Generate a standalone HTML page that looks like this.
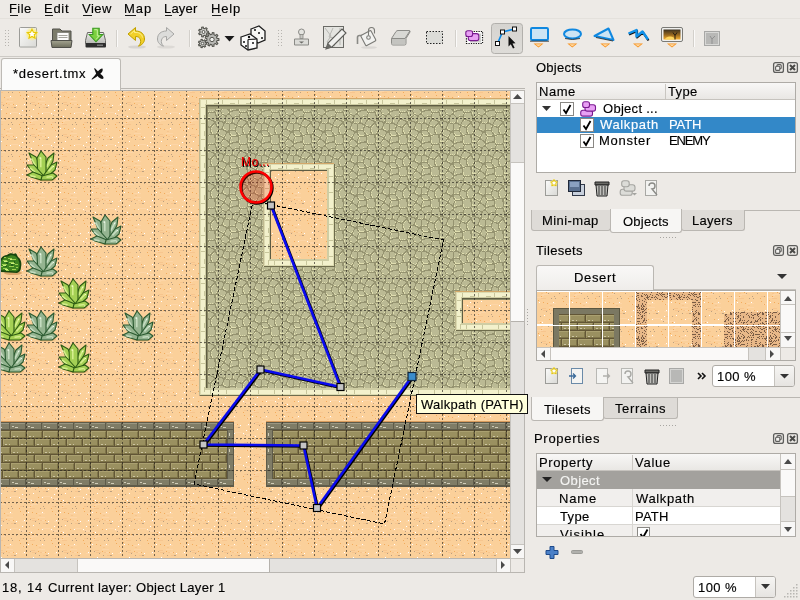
<!DOCTYPE html>
<html><head><meta charset="utf-8">
<style>
*{margin:0;padding:0;box-sizing:border-box}
html,body{width:800px;height:600px;overflow:hidden;background:#edeae6;font-family:"Liberation Sans",sans-serif;font-size:13px;color:#000}
.a{position:absolute}
.t{position:absolute;white-space:nowrap;line-height:1;will-change:transform;-webkit-text-stroke:.15px currentColor}
</style></head><body>
<div class="a" style="left:0px;top:18px;width:800px;height:1px;background:#e4e1dc;"></div><div class="a" style="left:10px;top:15px;width:8px;height:1px;background:#1a1a1a;"></div><div class="a" style="left:45px;top:15px;width:8px;height:1px;background:#1a1a1a;"></div><div class="a" style="left:83px;top:15px;width:9px;height:1px;background:#1a1a1a;"></div><div class="a" style="left:125px;top:15px;width:11px;height:1px;background:#1a1a1a;"></div><div class="a" style="left:165px;top:15px;width:7px;height:1px;background:#1a1a1a;"></div><div class="a" style="left:212px;top:15px;width:9px;height:1px;background:#1a1a1a;"></div><div class="a" style="left:0px;top:56px;width:800px;height:1px;background:#cdcac5;"></div><div class="a" style="left:0px;top:88px;width:525px;height:1px;background:#b9b6b1;"></div><div class="a" style="left:1px;top:58px;width:120px;height:32px;background:#fbfbfa;border:1px solid #bdbab5;border-bottom:none;border-radius:3px 3px 0 0"></div><div class="a" style="left:0px;top:90px;width:525px;height:483px;background:#edeae6;border:1px solid #b9b6b1"></div><svg class="a" style="left:1px;top:91px" width="509" height="467" viewBox="1 91 509 467" shape-rendering="crispEdges"><defs><pattern id="sand" patternUnits="userSpaceOnUse" x="-6" y="86" width="32" height="32"><rect width="32" height="32" fill="#fbd09a"/><path d="M28 29h6v1h-6zM12 11h7v1h-7zM30 11h3v1h-3zM28 19h4v1h-4zM5 2h7v1h-7zM25 28h7v1h-7zM10 0h7v1h-7zM4 3h3v1h-3zM12 15h7v1h-7zM1 29h5v1h-5zM28 12h7v1h-7zM14 18h6v1h-6zM0 5h6v1h-6zM17 26h7v1h-7z" fill="#fdd5a6"/><path d="M5 16h4v1h-4zM14 18h2v1h-2zM4 6h5v1h-5zM6 18h5v1h-5zM4 1h2v1h-2zM13 13h2v1h-2zM30 24h5v1h-5zM26 4h3v1h-3zM17 21h2v1h-2zM19 21h2v1h-2z" fill="#f7c58e"/><path d="M22 19h1v1h-1zM2 10h1v1h-1zM30 18h1v1h-1zM28 24h1v1h-1zM16 10h1v1h-1zM16 27h1v1h-1zM25 27h1v1h-1zM5 30h1v1h-1zM7 23h1v1h-1z" fill="#ffffff"/><path d="M9 19h1v1h-1zM17 4h1v1h-1zM29 4h1v1h-1zM27 29h1v1h-1zM22 1h1v1h-1zM18 6h1v1h-1zM4 17h1v1h-1zM11 1h1v1h-1zM14 6h1v1h-1zM3 24h1v1h-1zM20 21h1v1h-1zM13 21h1v1h-1zM21 21h1v1h-1z" fill="#bca080"/><path d="M26 9h1v1h-1zM12 27h1v1h-1zM19 18h1v1h-1zM3 30h1v1h-1zM29 12h1v1h-1zM25 6h1v1h-1zM10 11h1v1h-1zM1 8h1v1h-1zM4 4h1v1h-1zM9 0h1v1h-1zM12 17h1v1h-1zM6 10h1v1h-1z" fill="#f2ab5c"/></pattern><pattern id="cob" patternUnits="userSpaceOnUse" x="-6" y="86" width="32" height="32"><rect width="32" height="32" fill="#bbba94"/><path d="M0 0h1v1h-1zM7 0h1v1h-1zM14 0h1v1h-1zM21 0h1v1h-1zM22 0h1v1h-1zM23 0h1v1h-1zM30 0h1v1h-1zM31 0h1v1h-1zM7 1h1v1h-1zM14 1h1v1h-1zM21 1h1v1h-1zM22 1h1v1h-1zM23 1h1v1h-1zM24 1h1v1h-1zM30 1h1v1h-1zM31 1h1v1h-1zM0 2h1v1h-1zM1 2h1v1h-1zM7 2h1v1h-1zM14 2h1v1h-1zM20 2h1v1h-1zM21 2h1v1h-1zM25 2h1v1h-1zM26 2h1v1h-1zM27 2h1v1h-1zM30 2h1v1h-1zM31 2h1v1h-1zM1 3h1v1h-1zM2 3h1v1h-1zM3 3h1v1h-1zM4 3h1v1h-1zM6 3h1v1h-1zM7 3h1v1h-1zM14 3h1v1h-1zM20 3h1v1h-1zM27 3h1v1h-1zM28 3h1v1h-1zM29 3h1v1h-1zM4 4h1v1h-1zM5 4h1v1h-1zM6 4h1v1h-1zM7 4h1v1h-1zM13 4h1v1h-1zM14 4h1v1h-1zM19 4h1v1h-1zM28 4h1v1h-1zM29 4h1v1h-1zM5 5h1v1h-1zM6 5h1v1h-1zM8 5h1v1h-1zM9 5h1v1h-1zM10 5h1v1h-1zM12 5h1v1h-1zM13 5h1v1h-1zM14 5h1v1h-1zM15 5h1v1h-1zM16 5h1v1h-1zM19 5h1v1h-1zM27 5h1v1h-1zM28 5h1v1h-1zM29 5h1v1h-1zM5 6h1v1h-1zM11 6h1v1h-1zM16 6h1v1h-1zM17 6h1v1h-1zM18 6h1v1h-1zM26 6h1v1h-1zM27 6h1v1h-1zM29 6h1v1h-1zM30 6h1v1h-1zM5 7h1v1h-1zM11 7h1v1h-1zM18 7h1v1h-1zM19 7h1v1h-1zM25 7h1v1h-1zM26 7h1v1h-1zM30 7h1v1h-1zM4 8h1v1h-1zM11 8h1v1h-1zM18 8h1v1h-1zM20 8h1v1h-1zM21 8h1v1h-1zM22 8h1v1h-1zM24 8h1v1h-1zM25 8h1v1h-1zM30 8h1v1h-1zM31 8h1v1h-1zM4 9h1v1h-1zM11 9h1v1h-1zM17 9h1v1h-1zM18 9h1v1h-1zM22 9h1v1h-1zM23 9h1v1h-1zM24 9h1v1h-1zM31 9h1v1h-1zM0 10h1v1h-1zM3 10h1v1h-1zM4 10h1v1h-1zM11 10h1v1h-1zM17 10h1v1h-1zM24 10h1v1h-1zM0 11h1v1h-1zM1 11h1v1h-1zM2 11h1v1h-1zM3 11h1v1h-1zM4 11h1v1h-1zM5 11h1v1h-1zM11 11h1v1h-1zM17 11h1v1h-1zM24 11h1v1h-1zM0 12h1v1h-1zM5 12h1v1h-1zM6 12h1v1h-1zM7 12h1v1h-1zM10 12h1v1h-1zM11 12h1v1h-1zM12 12h1v1h-1zM13 12h1v1h-1zM14 12h1v1h-1zM15 12h1v1h-1zM16 12h1v1h-1zM17 12h1v1h-1zM24 12h1v1h-1zM0 13h1v1h-1zM7 13h1v1h-1zM8 13h1v1h-1zM9 13h1v1h-1zM10 13h1v1h-1zM11 13h1v1h-1zM17 13h1v1h-1zM24 13h1v1h-1zM31 13h1v1h-1zM8 14h1v1h-1zM9 14h1v1h-1zM10 14h1v1h-1zM11 14h1v1h-1zM18 14h1v1h-1zM24 14h1v1h-1zM25 14h1v1h-1zM31 14h1v1h-1zM8 15h1v1h-1zM11 15h1v1h-1zM18 15h1v1h-1zM19 15h1v1h-1zM25 15h1v1h-1zM30 15h1v1h-1zM31 15h1v1h-1zM0 16h1v1h-1zM7 16h1v1h-1zM11 16h1v1h-1zM12 16h1v1h-1zM19 16h1v1h-1zM23 16h1v1h-1zM24 16h1v1h-1zM25 16h1v1h-1zM26 16h1v1h-1zM27 16h1v1h-1zM28 16h1v1h-1zM29 16h1v1h-1zM30 16h1v1h-1zM31 16h1v1h-1zM0 17h1v1h-1zM1 17h1v1h-1zM7 17h1v1h-1zM12 17h1v1h-1zM18 17h1v1h-1zM19 17h1v1h-1zM20 17h1v1h-1zM21 17h1v1h-1zM22 17h1v1h-1zM28 17h1v1h-1zM29 17h1v1h-1zM2 18h1v1h-1zM3 18h1v1h-1zM6 18h1v1h-1zM13 18h1v1h-1zM14 18h1v1h-1zM15 18h1v1h-1zM16 18h1v1h-1zM17 18h1v1h-1zM18 18h1v1h-1zM19 18h1v1h-1zM20 18h1v1h-1zM28 18h1v1h-1zM29 18h1v1h-1zM4 19h1v1h-1zM5 19h1v1h-1zM6 19h1v1h-1zM12 19h1v1h-1zM20 19h1v1h-1zM28 19h1v1h-1zM29 19h1v1h-1zM5 20h1v1h-1zM6 20h1v1h-1zM12 20h1v1h-1zM20 20h1v1h-1zM29 20h1v1h-1zM4 21h1v1h-1zM5 21h1v1h-1zM6 21h1v1h-1zM7 21h1v1h-1zM11 21h1v1h-1zM20 21h1v1h-1zM29 21h1v1h-1zM4 22h1v1h-1zM8 22h1v1h-1zM9 22h1v1h-1zM11 22h1v1h-1zM20 22h1v1h-1zM29 22h1v1h-1zM3 23h1v1h-1zM9 23h1v1h-1zM10 23h1v1h-1zM11 23h1v1h-1zM18 23h1v1h-1zM19 23h1v1h-1zM20 23h1v1h-1zM29 23h1v1h-1zM0 24h1v1h-1zM1 24h1v1h-1zM2 24h1v1h-1zM10 24h1v1h-1zM11 24h1v1h-1zM14 24h1v1h-1zM15 24h1v1h-1zM16 24h1v1h-1zM17 24h1v1h-1zM18 24h1v1h-1zM19 24h1v1h-1zM20 24h1v1h-1zM29 24h1v1h-1zM30 24h1v1h-1zM31 24h1v1h-1zM2 25h1v1h-1zM11 25h1v1h-1zM12 25h1v1h-1zM13 25h1v1h-1zM14 25h1v1h-1zM21 25h1v1h-1zM28 25h1v1h-1zM3 26h1v1h-1zM11 26h1v1h-1zM21 26h1v1h-1zM22 26h1v1h-1zM23 26h1v1h-1zM24 26h1v1h-1zM25 26h1v1h-1zM26 26h1v1h-1zM27 26h1v1h-1zM28 26h1v1h-1zM29 26h1v1h-1zM3 27h1v1h-1zM10 27h1v1h-1zM11 27h1v1h-1zM22 27h1v1h-1zM29 27h1v1h-1zM4 28h1v1h-1zM5 28h1v1h-1zM9 28h1v1h-1zM10 28h1v1h-1zM11 28h1v1h-1zM21 28h1v1h-1zM29 28h1v1h-1zM3 29h1v1h-1zM6 29h1v1h-1zM7 29h1v1h-1zM8 29h1v1h-1zM12 29h1v1h-1zM21 29h1v1h-1zM29 29h1v1h-1zM30 29h1v1h-1zM1 30h1v1h-1zM2 30h1v1h-1zM7 30h1v1h-1zM8 30h1v1h-1zM13 30h1v1h-1zM17 30h1v1h-1zM18 30h1v1h-1zM19 30h1v1h-1zM20 30h1v1h-1zM21 30h1v1h-1zM30 30h1v1h-1zM0 31h1v1h-1zM1 31h1v1h-1zM7 31h1v1h-1zM14 31h1v1h-1zM15 31h1v1h-1zM16 31h1v1h-1zM21 31h1v1h-1zM30 31h1v1h-1z" fill="#959370"/><path d="M1 0h1v1h-1zM15 0h1v1h-1zM0 1h1v1h-1zM6 2h1v1h-1zM15 2h1v1h-1zM22 2h1v1h-1zM29 2h1v1h-1zM15 3h1v1h-1zM8 4h1v1h-1zM10 4h1v1h-1zM12 4h1v1h-1zM31 6h1v1h-1zM20 7h1v1h-1zM21 7h1v1h-1zM24 7h1v1h-1zM27 7h1v1h-1zM31 7h1v1h-1zM17 8h1v1h-1zM26 8h1v1h-1zM5 9h1v1h-1zM5 10h1v1h-1zM25 10h1v1h-1zM6 11h1v1h-1zM7 11h1v1h-1zM12 11h1v1h-1zM15 11h1v1h-1zM16 11h1v1h-1zM1 12h1v1h-1zM25 12h1v1h-1zM31 12h1v1h-1zM1 13h1v1h-1zM18 13h1v1h-1zM25 13h1v1h-1zM26 14h1v1h-1zM30 14h1v1h-1zM12 15h1v1h-1zM20 15h1v1h-1zM26 15h1v1h-1zM1 16h1v1h-1zM13 16h1v1h-1zM21 16h1v1h-1zM3 17h1v1h-1zM6 17h1v1h-1zM13 17h1v1h-1zM14 17h1v1h-1zM15 17h1v1h-1zM16 17h1v1h-1zM17 17h1v1h-1zM23 17h1v1h-1zM30 17h1v1h-1zM5 18h1v1h-1zM12 18h1v1h-1zM21 18h1v1h-1zM30 18h1v1h-1zM7 19h1v1h-1zM13 19h1v1h-1zM4 20h1v1h-1zM13 20h1v1h-1zM5 22h1v1h-1zM21 22h1v1h-1zM30 22h1v1h-1zM0 23h1v1h-1zM1 23h1v1h-1zM4 23h1v1h-1zM12 23h1v1h-1zM14 23h1v1h-1zM21 23h1v1h-1zM30 23h1v1h-1zM31 23h1v1h-1zM12 24h1v1h-1zM21 24h1v1h-1zM22 25h1v1h-1zM24 25h1v1h-1zM26 25h1v1h-1zM10 26h1v1h-1zM30 26h1v1h-1zM4 27h1v1h-1zM5 27h1v1h-1zM12 27h1v1h-1zM21 27h1v1h-1zM23 27h1v1h-1zM30 27h1v1h-1zM1 29h1v1h-1zM4 29h1v1h-1zM17 29h1v1h-1zM0 30h1v1h-1zM17 31h1v1h-1zM22 31h1v1h-1zM23 31h1v1h-1z" fill="#e0deb0"/></pattern><pattern id="brk" patternUnits="userSpaceOnUse" x="-6" y="430" width="32" height="16"><rect width="32" height="16" fill="#625636"/><path d="M-15 1h15v7h-15zM1 1h15v7h-15zM17 1h15v7h-15zM33 1h15v7h-15zM-7 9h15v7h-15zM9 9h15v7h-15zM25 9h15v7h-15zM41 9h15v7h-15z" fill="#9a9060"/><path d="M-15 1h14v1h-14zM-15 2h1v4h-1zM1 1h14v1h-14zM1 2h1v4h-1zM17 1h14v1h-14zM17 2h1v4h-1zM33 1h14v1h-14zM33 2h1v4h-1zM-7 9h14v1h-14zM-7 10h1v4h-1zM9 9h14v1h-14zM9 10h1v4h-1zM25 9h14v1h-14zM25 10h1v4h-1zM41 9h14v1h-14zM41 10h1v4h-1z" fill="#aaa070"/><path d="M-14 7h14v1h-14zM-1 2h1v5h-1zM2 7h14v1h-14zM15 2h1v5h-1zM18 7h14v1h-14zM31 2h1v5h-1zM34 7h14v1h-14zM47 2h1v5h-1zM-6 15h14v1h-14zM7 10h1v5h-1zM10 15h14v1h-14zM23 10h1v5h-1zM26 15h14v1h-14zM39 10h1v5h-1zM42 15h14v1h-14zM55 10h1v5h-1z" fill="#7e7448"/><path d="M-13 6h2v1h-2zM-9 6h1v1h-1zM3 6h2v1h-2zM7 6h1v1h-1zM19 6h2v1h-2zM23 6h1v1h-1zM35 6h2v1h-2zM39 6h1v1h-1zM-5 14h2v1h-2zM-1 14h1v1h-1zM11 14h2v1h-2zM15 14h1v1h-1zM27 14h2v1h-2zM31 14h1v1h-1zM43 14h2v1h-2zM47 14h1v1h-1z" fill="#cec6a4"/></pattern><pattern id="cap" patternUnits="userSpaceOnUse" x="-6" y="422" width="16" height="8"><rect width="16" height="8" fill="#7f7c66"/><path d="M0 0h16v1h-16zM0 7h16v1h-16zM15 0h1v8h-1z" fill="#5e5b4a"/><path d="M1 1h14v1h-14z" fill="#9a9782"/><path d="M2 4h2v1h-2zM5 5h3v1h-3z" fill="#d0ccb8"/></pattern></defs><rect x="0" y="80" width="520" height="490" fill="url(#sand)"/><rect x="199" y="98" width="331" height="297" fill="#d3a86a"/><rect x="199" y="99" width="1" height="296" fill="#c0b890"/><rect x="200" y="99" width="331" height="297" fill="#6e6c4c"/><rect x="200" y="99" width="330" height="296" fill="#f3f1cc"/><rect x="200.5" y="99.5" width="329" height="295" fill="none" stroke="#dcdab0" stroke-width="1"/><path d="M206 100h1v4h-1zM210 390h1v4h-1zM214 103h5v1h-5zM222 100h1v4h-1zM226 390h1v4h-1zM230 103h5v1h-5zM238 100h1v4h-1zM242 390h1v4h-1zM246 103h5v1h-5zM254 100h1v4h-1zM258 390h1v4h-1zM262 103h5v1h-5zM270 100h1v4h-1zM274 390h1v4h-1zM278 103h5v1h-5zM286 100h1v4h-1zM290 390h1v4h-1zM294 103h5v1h-5zM302 100h1v4h-1zM306 390h1v4h-1zM310 103h5v1h-5zM318 100h1v4h-1zM322 390h1v4h-1zM326 103h5v1h-5zM334 100h1v4h-1zM338 390h1v4h-1zM342 103h5v1h-5zM350 100h1v4h-1zM354 390h1v4h-1zM358 103h5v1h-5zM366 100h1v4h-1zM370 390h1v4h-1zM374 103h5v1h-5zM382 100h1v4h-1zM386 390h1v4h-1zM390 103h5v1h-5zM398 100h1v4h-1zM402 390h1v4h-1zM406 103h5v1h-5zM414 100h1v4h-1zM418 390h1v4h-1zM422 103h5v1h-5zM430 100h1v4h-1zM434 390h1v4h-1zM438 103h5v1h-5zM446 100h1v4h-1zM450 390h1v4h-1zM454 103h5v1h-5zM462 100h1v4h-1zM466 390h1v4h-1zM470 103h5v1h-5zM478 100h1v4h-1zM482 390h1v4h-1zM486 103h5v1h-5zM494 100h1v4h-1zM498 390h1v4h-1zM502 103h5v1h-5zM510 100h1v4h-1zM514 390h1v4h-1zM518 103h5v1h-5zM201 107h4v1h-4zM525 111h4v1h-4zM204 115h1v5h-1zM201 123h4v1h-4zM525 127h4v1h-4zM204 131h1v5h-1zM201 139h4v1h-4zM525 143h4v1h-4zM204 147h1v5h-1zM201 155h4v1h-4zM525 159h4v1h-4zM204 163h1v5h-1zM201 171h4v1h-4zM525 175h4v1h-4zM204 179h1v5h-1zM201 187h4v1h-4zM525 191h4v1h-4zM204 195h1v5h-1zM201 203h4v1h-4zM525 207h4v1h-4zM204 211h1v5h-1zM201 219h4v1h-4zM525 223h4v1h-4zM204 227h1v5h-1zM201 235h4v1h-4zM525 239h4v1h-4zM204 243h1v5h-1zM201 251h4v1h-4zM525 255h4v1h-4zM204 259h1v5h-1zM201 267h4v1h-4zM525 271h4v1h-4zM204 275h1v5h-1zM201 283h4v1h-4zM525 287h4v1h-4zM204 291h1v5h-1zM201 299h4v1h-4zM525 303h4v1h-4zM204 307h1v5h-1zM201 315h4v1h-4zM525 319h4v1h-4zM204 323h1v5h-1zM201 331h4v1h-4zM525 335h4v1h-4zM204 339h1v5h-1zM201 347h4v1h-4zM525 351h4v1h-4zM204 355h1v5h-1zM201 363h4v1h-4zM525 367h4v1h-4zM204 371h1v5h-1zM201 379h4v1h-4zM525 383h4v1h-4zM204 387h1v5h-1z" fill="#c8c69c"/><rect x="205" y="104" width="320" height="286" fill="#cfcda4"/><rect x="206" y="105" width="317" height="283" fill="#5e5c42"/><rect x="207" y="106" width="316" height="282" fill="#8a8864"/><rect x="208" y="107" width="315" height="281" fill="#a4a27c"/><rect x="208" y="109" width="320" height="279" fill="url(#cob)"/><rect x="263" y="163" width="71" height="103" fill="#d3a86a"/><rect x="263" y="164" width="1" height="102" fill="#c0b890"/><rect x="264" y="164" width="71" height="103" fill="#6e6c4c"/><rect x="264" y="164" width="70" height="102" fill="#f3f1cc"/><rect x="264.5" y="164.5" width="69" height="101" fill="none" stroke="#dcdab0" stroke-width="1"/><path d="M270 165h1v4h-1zM274 261h1v4h-1zM278 168h5v1h-5zM286 165h1v4h-1zM290 261h1v4h-1zM294 168h5v1h-5zM302 165h1v4h-1zM306 261h1v4h-1zM310 168h5v1h-5zM318 165h1v4h-1zM322 261h1v4h-1zM326 168h5v1h-5zM265 172h4v1h-4zM329 176h4v1h-4zM268 180h1v5h-1zM265 188h4v1h-4zM329 192h4v1h-4zM268 196h1v5h-1zM265 204h4v1h-4zM329 208h4v1h-4zM268 212h1v5h-1zM265 220h4v1h-4zM329 224h4v1h-4zM268 228h1v5h-1zM265 236h4v1h-4zM329 240h4v1h-4zM268 244h1v5h-1zM265 252h4v1h-4zM329 256h4v1h-4zM268 260h1v5h-1z" fill="#c8c69c"/><rect x="269" y="169" width="60" height="92" fill="#cfcda4"/><rect x="270" y="170" width="57" height="89" fill="#5e5c42"/><rect x="271" y="171" width="56" height="88" fill="#8a8864"/><rect x="272" y="172" width="55" height="87" fill="#a4a27c"/><rect x="271" y="171" width="56" height="88" fill="url(#sand)"/><rect x="455" y="291" width="75" height="39" fill="#d3a86a"/><rect x="455" y="292" width="1" height="38" fill="#c0b890"/><rect x="456" y="292" width="75" height="39" fill="#6e6c4c"/><rect x="456" y="292" width="74" height="38" fill="#f3f1cc"/><rect x="456.5" y="292.5" width="73" height="37" fill="none" stroke="#dcdab0" stroke-width="1"/><path d="M462 293h1v4h-1zM466 325h1v4h-1zM470 296h5v1h-5zM478 293h1v4h-1zM482 325h1v4h-1zM486 296h5v1h-5zM494 293h1v4h-1zM498 325h1v4h-1zM502 296h5v1h-5zM510 293h1v4h-1zM514 325h1v4h-1zM518 296h5v1h-5zM457 300h4v1h-4zM525 304h4v1h-4zM460 308h1v5h-1zM457 316h4v1h-4zM525 320h4v1h-4zM460 324h1v5h-1z" fill="#c8c69c"/><rect x="461" y="297" width="64" height="28" fill="#cfcda4"/><rect x="462" y="298" width="61" height="25" fill="#5e5c42"/><rect x="463" y="299" width="60" height="24" fill="#8a8864"/><rect x="464" y="300" width="59" height="23" fill="#a4a27c"/><rect x="463" y="300" width="60" height="23" fill="url(#sand)"/><rect x="-10" y="421" width="244" height="1" fill="#d89b5c"/><rect x="-10" y="422" width="244" height="65" fill="url(#cap)"/><rect x="-4" y="430" width="232" height="49" fill="url(#brk)"/><rect x="-10" y="422" width="244" height="65" fill="none" stroke="#55523f" stroke-width="1" transform="translate(.5 .5) scale(1)" style="display:none"/><rect x="266" y="421" width="264" height="1" fill="#d89b5c"/><rect x="266" y="422" width="264" height="65" fill="url(#cap)"/><rect x="272" y="430" width="252" height="49" fill="url(#brk)"/><rect x="266" y="422" width="264" height="65" fill="none" stroke="#55523f" stroke-width="1" transform="translate(.5 .5) scale(1)" style="display:none"/><path d="M228 430h6v49h-6z M266 430h6v49h-6z" fill="#7f7c66"/><path d="M233 422h1v65h-1z M266 422h1v65h-1z M227 430h1v49h-1z M272 430h1v49h-1z" fill="#5e5b4a"/><path d="M229 438h4v1h-4zM229 454h4v1h-4zM229 470h4v1h-4zM267 438h4v1h-4zM267 454h4v1h-4zM267 470h4v1h-4z" fill="#5e5b4a"/><path d="M229 433h1v3h-1zM229 449h1v3h-1zM229 465h1v3h-1zM268 433h1v3h-1zM268 449h1v3h-1zM268 465h1v3h-1z" fill="#d0ccb8"/><g transform="translate(26,150)" shape-rendering="auto"><ellipse cx="20" cy="29" rx="10" ry="2.5" fill="#d8a060" opacity=".7"/><path d="M12 26 L6 10 L3 3 L10 7 L18 23Z" fill="#a4d054" stroke="#2c5a12" stroke-width="1.1" stroke-linejoin="round"/><path d="M9.7 16.4 L5.5 8.4" stroke="#d4ee8c" stroke-width="1.6"/><path d="M5.0 9.9 l-0.9 -1.6" stroke="#fbffd0" stroke-width="1"/><path d="M15 25 L22 8 L28 3 L27 11 L20 26Z" fill="#a4d054" stroke="#2c5a12" stroke-width="1.1" stroke-linejoin="round"/><path d="M20.6 17.1 L24.9 8.6" stroke="#d4ee8c" stroke-width="1.6"/><path d="M24.4 10.1 l0.8 -1.7" stroke="#fbffd0" stroke-width="1"/><path d="M12 27 L11 8 L15 1 L20 7 L20 27Z" fill="#a4d054" stroke="#2c5a12" stroke-width="1.1" stroke-linejoin="round"/><path d="M14.8 17.2 L14.8 7.5" stroke="#d4ee8c" stroke-width="1.6"/><path d="M14.2 9.0 l-0.1 -1.9" stroke="#fbffd0" stroke-width="1"/><path d="M13 28 L4 19 L1 15 L8 15 L17 25Z" fill="#a4d054" stroke="#2c5a12" stroke-width="1.1" stroke-linejoin="round"/><path d="M8.9 22.2 L4.0 17.9" stroke="#d4ee8c" stroke-width="1.6"/><path d="M3.5 19.4 l-1.1 -0.9" stroke="#fbffd0" stroke-width="1"/><path d="M17 26 L25 15 L31 12 L29 20 L20 28Z" fill="#a4d054" stroke="#2c5a12" stroke-width="1.1" stroke-linejoin="round"/><path d="M22.4 21.4 L27.4 15.8" stroke="#d4ee8c" stroke-width="1.6"/><path d="M26.9 17.2 l0.9 -1.1" stroke="#fbffd0" stroke-width="1"/><path d="M15 30 L5 27 L1 25 L7 22 L17 26Z" fill="#a4d054" stroke="#2c5a12" stroke-width="1.1" stroke-linejoin="round"/><path d="M9.6 26.9 L4.2 25.8" stroke="#d4ee8c" stroke-width="1.6"/><path d="M3.8 27.2 l-1.1 -0.2" stroke="#fbffd0" stroke-width="1"/><path d="M16 26 L27 23 L31 26 L26 30 L15 30Z" fill="#a4d054" stroke="#2c5a12" stroke-width="1.1" stroke-linejoin="round"/><path d="M20.5 27.2 L26.6 26.5" stroke="#d4ee8c" stroke-width="1.6"/><path d="M26.1 28.0 l1.2 -0.1" stroke="#fbffd0" stroke-width="1"/></g><g transform="translate(90,214)" shape-rendering="auto"><ellipse cx="20" cy="29" rx="10" ry="2.5" fill="#d8a060" opacity=".7"/><path d="M12 26 L6 10 L3 3 L10 7 L18 23Z" fill="#94b490" stroke="#2a5a30" stroke-width="1.1" stroke-linejoin="round"/><path d="M9.7 16.4 L5.5 8.4" stroke="#c4dcc0" stroke-width="1.6"/><path d="M5.0 9.9 l-0.9 -1.6" stroke="#f8fff4" stroke-width="1"/><path d="M15 25 L22 8 L28 3 L27 11 L20 26Z" fill="#94b490" stroke="#2a5a30" stroke-width="1.1" stroke-linejoin="round"/><path d="M20.6 17.1 L24.9 8.6" stroke="#c4dcc0" stroke-width="1.6"/><path d="M24.4 10.1 l0.8 -1.7" stroke="#f8fff4" stroke-width="1"/><path d="M12 27 L11 8 L15 1 L20 7 L20 27Z" fill="#94b490" stroke="#2a5a30" stroke-width="1.1" stroke-linejoin="round"/><path d="M14.8 17.2 L14.8 7.5" stroke="#c4dcc0" stroke-width="1.6"/><path d="M14.2 9.0 l-0.1 -1.9" stroke="#f8fff4" stroke-width="1"/><path d="M13 28 L4 19 L1 15 L8 15 L17 25Z" fill="#94b490" stroke="#2a5a30" stroke-width="1.1" stroke-linejoin="round"/><path d="M8.9 22.2 L4.0 17.9" stroke="#c4dcc0" stroke-width="1.6"/><path d="M3.5 19.4 l-1.1 -0.9" stroke="#f8fff4" stroke-width="1"/><path d="M17 26 L25 15 L31 12 L29 20 L20 28Z" fill="#94b490" stroke="#2a5a30" stroke-width="1.1" stroke-linejoin="round"/><path d="M22.4 21.4 L27.4 15.8" stroke="#c4dcc0" stroke-width="1.6"/><path d="M26.9 17.2 l0.9 -1.1" stroke="#f8fff4" stroke-width="1"/><path d="M15 30 L5 27 L1 25 L7 22 L17 26Z" fill="#94b490" stroke="#2a5a30" stroke-width="1.1" stroke-linejoin="round"/><path d="M9.6 26.9 L4.2 25.8" stroke="#c4dcc0" stroke-width="1.6"/><path d="M3.8 27.2 l-1.1 -0.2" stroke="#f8fff4" stroke-width="1"/><path d="M16 26 L27 23 L31 26 L26 30 L15 30Z" fill="#94b490" stroke="#2a5a30" stroke-width="1.1" stroke-linejoin="round"/><path d="M20.5 27.2 L26.6 26.5" stroke="#c4dcc0" stroke-width="1.6"/><path d="M26.1 28.0 l1.2 -0.1" stroke="#f8fff4" stroke-width="1"/></g><g transform="translate(-6,246)" shape-rendering="auto">
<ellipse cx="19" cy="27" rx="9" ry="2" fill="#d9a56a"/>
<path d="M6 26 C3 24 4 18 6 15 C7 11 10 9 13 9 C15 7 18 7 20 8 C22 6 23 9 24 11 C27 13 28 17 27 21 C27 24 26 26 23 27 Z" fill="#17460e"/>
<path d="M7 24 C5 21 6 17 8 14 C9 12 12 10 14 10.5 C16 9 19 9 21 10 C24 12 26 16 25.5 20 C25 23 24 25 22 25.5 Z" fill="#3f8420"/>
<path d="M9 14h4v1h-4zM13 15h1v1h-1zM14 12h4v1h-4zM18 13h1v1h-1zM19 13h3v1h-3zM8 18h5v1h-5zM15 16h5v1h-5zM20 17h1v1h-1zM21 18h3v1h-3zM9 22h4v1h-4zM15 20h5v1h-5zM18 23h4v1h-4zM10 11h2v1h-2zM7 20h2v1h-2zM12 24h3v1h-3zM22 21h2v1h-2z" fill="#9cd050"/><path d="M10 15h3v1h-3zM16 13h2v1h-2zM9 19h3v1h-3zM17 17h3v1h-3zM11 23h3v1h-3z" fill="#cdf080"/>
<path d="M12 16h2v2h-2zM17 18h2v2h-2zM11 20h2v1h-2zM20 15h1v2h-1z" fill="#25601a"/>
</g><g transform="translate(26,246)" shape-rendering="auto"><ellipse cx="20" cy="29" rx="10" ry="2.5" fill="#d8a060" opacity=".7"/><path d="M12 26 L6 10 L3 3 L10 7 L18 23Z" fill="#94b490" stroke="#2a5a30" stroke-width="1.1" stroke-linejoin="round"/><path d="M9.7 16.4 L5.5 8.4" stroke="#c4dcc0" stroke-width="1.6"/><path d="M5.0 9.9 l-0.9 -1.6" stroke="#f8fff4" stroke-width="1"/><path d="M15 25 L22 8 L28 3 L27 11 L20 26Z" fill="#94b490" stroke="#2a5a30" stroke-width="1.1" stroke-linejoin="round"/><path d="M20.6 17.1 L24.9 8.6" stroke="#c4dcc0" stroke-width="1.6"/><path d="M24.4 10.1 l0.8 -1.7" stroke="#f8fff4" stroke-width="1"/><path d="M12 27 L11 8 L15 1 L20 7 L20 27Z" fill="#94b490" stroke="#2a5a30" stroke-width="1.1" stroke-linejoin="round"/><path d="M14.8 17.2 L14.8 7.5" stroke="#c4dcc0" stroke-width="1.6"/><path d="M14.2 9.0 l-0.1 -1.9" stroke="#f8fff4" stroke-width="1"/><path d="M13 28 L4 19 L1 15 L8 15 L17 25Z" fill="#94b490" stroke="#2a5a30" stroke-width="1.1" stroke-linejoin="round"/><path d="M8.9 22.2 L4.0 17.9" stroke="#c4dcc0" stroke-width="1.6"/><path d="M3.5 19.4 l-1.1 -0.9" stroke="#f8fff4" stroke-width="1"/><path d="M17 26 L25 15 L31 12 L29 20 L20 28Z" fill="#94b490" stroke="#2a5a30" stroke-width="1.1" stroke-linejoin="round"/><path d="M22.4 21.4 L27.4 15.8" stroke="#c4dcc0" stroke-width="1.6"/><path d="M26.9 17.2 l0.9 -1.1" stroke="#f8fff4" stroke-width="1"/><path d="M15 30 L5 27 L1 25 L7 22 L17 26Z" fill="#94b490" stroke="#2a5a30" stroke-width="1.1" stroke-linejoin="round"/><path d="M9.6 26.9 L4.2 25.8" stroke="#c4dcc0" stroke-width="1.6"/><path d="M3.8 27.2 l-1.1 -0.2" stroke="#f8fff4" stroke-width="1"/><path d="M16 26 L27 23 L31 26 L26 30 L15 30Z" fill="#94b490" stroke="#2a5a30" stroke-width="1.1" stroke-linejoin="round"/><path d="M20.5 27.2 L26.6 26.5" stroke="#c4dcc0" stroke-width="1.6"/><path d="M26.1 28.0 l1.2 -0.1" stroke="#f8fff4" stroke-width="1"/></g><g transform="translate(58,278)" shape-rendering="auto"><ellipse cx="20" cy="29" rx="10" ry="2.5" fill="#d8a060" opacity=".7"/><path d="M12 26 L6 10 L3 3 L10 7 L18 23Z" fill="#a4d054" stroke="#2c5a12" stroke-width="1.1" stroke-linejoin="round"/><path d="M9.7 16.4 L5.5 8.4" stroke="#d4ee8c" stroke-width="1.6"/><path d="M5.0 9.9 l-0.9 -1.6" stroke="#fbffd0" stroke-width="1"/><path d="M15 25 L22 8 L28 3 L27 11 L20 26Z" fill="#a4d054" stroke="#2c5a12" stroke-width="1.1" stroke-linejoin="round"/><path d="M20.6 17.1 L24.9 8.6" stroke="#d4ee8c" stroke-width="1.6"/><path d="M24.4 10.1 l0.8 -1.7" stroke="#fbffd0" stroke-width="1"/><path d="M12 27 L11 8 L15 1 L20 7 L20 27Z" fill="#a4d054" stroke="#2c5a12" stroke-width="1.1" stroke-linejoin="round"/><path d="M14.8 17.2 L14.8 7.5" stroke="#d4ee8c" stroke-width="1.6"/><path d="M14.2 9.0 l-0.1 -1.9" stroke="#fbffd0" stroke-width="1"/><path d="M13 28 L4 19 L1 15 L8 15 L17 25Z" fill="#a4d054" stroke="#2c5a12" stroke-width="1.1" stroke-linejoin="round"/><path d="M8.9 22.2 L4.0 17.9" stroke="#d4ee8c" stroke-width="1.6"/><path d="M3.5 19.4 l-1.1 -0.9" stroke="#fbffd0" stroke-width="1"/><path d="M17 26 L25 15 L31 12 L29 20 L20 28Z" fill="#a4d054" stroke="#2c5a12" stroke-width="1.1" stroke-linejoin="round"/><path d="M22.4 21.4 L27.4 15.8" stroke="#d4ee8c" stroke-width="1.6"/><path d="M26.9 17.2 l0.9 -1.1" stroke="#fbffd0" stroke-width="1"/><path d="M15 30 L5 27 L1 25 L7 22 L17 26Z" fill="#a4d054" stroke="#2c5a12" stroke-width="1.1" stroke-linejoin="round"/><path d="M9.6 26.9 L4.2 25.8" stroke="#d4ee8c" stroke-width="1.6"/><path d="M3.8 27.2 l-1.1 -0.2" stroke="#fbffd0" stroke-width="1"/><path d="M16 26 L27 23 L31 26 L26 30 L15 30Z" fill="#a4d054" stroke="#2c5a12" stroke-width="1.1" stroke-linejoin="round"/><path d="M20.5 27.2 L26.6 26.5" stroke="#d4ee8c" stroke-width="1.6"/><path d="M26.1 28.0 l1.2 -0.1" stroke="#fbffd0" stroke-width="1"/></g><g transform="translate(-6,310)" shape-rendering="auto"><ellipse cx="20" cy="29" rx="10" ry="2.5" fill="#d8a060" opacity=".7"/><path d="M12 26 L6 10 L3 3 L10 7 L18 23Z" fill="#a4d054" stroke="#2c5a12" stroke-width="1.1" stroke-linejoin="round"/><path d="M9.7 16.4 L5.5 8.4" stroke="#d4ee8c" stroke-width="1.6"/><path d="M5.0 9.9 l-0.9 -1.6" stroke="#fbffd0" stroke-width="1"/><path d="M15 25 L22 8 L28 3 L27 11 L20 26Z" fill="#a4d054" stroke="#2c5a12" stroke-width="1.1" stroke-linejoin="round"/><path d="M20.6 17.1 L24.9 8.6" stroke="#d4ee8c" stroke-width="1.6"/><path d="M24.4 10.1 l0.8 -1.7" stroke="#fbffd0" stroke-width="1"/><path d="M12 27 L11 8 L15 1 L20 7 L20 27Z" fill="#a4d054" stroke="#2c5a12" stroke-width="1.1" stroke-linejoin="round"/><path d="M14.8 17.2 L14.8 7.5" stroke="#d4ee8c" stroke-width="1.6"/><path d="M14.2 9.0 l-0.1 -1.9" stroke="#fbffd0" stroke-width="1"/><path d="M13 28 L4 19 L1 15 L8 15 L17 25Z" fill="#a4d054" stroke="#2c5a12" stroke-width="1.1" stroke-linejoin="round"/><path d="M8.9 22.2 L4.0 17.9" stroke="#d4ee8c" stroke-width="1.6"/><path d="M3.5 19.4 l-1.1 -0.9" stroke="#fbffd0" stroke-width="1"/><path d="M17 26 L25 15 L31 12 L29 20 L20 28Z" fill="#a4d054" stroke="#2c5a12" stroke-width="1.1" stroke-linejoin="round"/><path d="M22.4 21.4 L27.4 15.8" stroke="#d4ee8c" stroke-width="1.6"/><path d="M26.9 17.2 l0.9 -1.1" stroke="#fbffd0" stroke-width="1"/><path d="M15 30 L5 27 L1 25 L7 22 L17 26Z" fill="#a4d054" stroke="#2c5a12" stroke-width="1.1" stroke-linejoin="round"/><path d="M9.6 26.9 L4.2 25.8" stroke="#d4ee8c" stroke-width="1.6"/><path d="M3.8 27.2 l-1.1 -0.2" stroke="#fbffd0" stroke-width="1"/><path d="M16 26 L27 23 L31 26 L26 30 L15 30Z" fill="#a4d054" stroke="#2c5a12" stroke-width="1.1" stroke-linejoin="round"/><path d="M20.5 27.2 L26.6 26.5" stroke="#d4ee8c" stroke-width="1.6"/><path d="M26.1 28.0 l1.2 -0.1" stroke="#fbffd0" stroke-width="1"/></g><g transform="translate(26,310)" shape-rendering="auto"><ellipse cx="20" cy="29" rx="10" ry="2.5" fill="#d8a060" opacity=".7"/><path d="M12 26 L6 10 L3 3 L10 7 L18 23Z" fill="#94b490" stroke="#2a5a30" stroke-width="1.1" stroke-linejoin="round"/><path d="M9.7 16.4 L5.5 8.4" stroke="#c4dcc0" stroke-width="1.6"/><path d="M5.0 9.9 l-0.9 -1.6" stroke="#f8fff4" stroke-width="1"/><path d="M15 25 L22 8 L28 3 L27 11 L20 26Z" fill="#94b490" stroke="#2a5a30" stroke-width="1.1" stroke-linejoin="round"/><path d="M20.6 17.1 L24.9 8.6" stroke="#c4dcc0" stroke-width="1.6"/><path d="M24.4 10.1 l0.8 -1.7" stroke="#f8fff4" stroke-width="1"/><path d="M12 27 L11 8 L15 1 L20 7 L20 27Z" fill="#94b490" stroke="#2a5a30" stroke-width="1.1" stroke-linejoin="round"/><path d="M14.8 17.2 L14.8 7.5" stroke="#c4dcc0" stroke-width="1.6"/><path d="M14.2 9.0 l-0.1 -1.9" stroke="#f8fff4" stroke-width="1"/><path d="M13 28 L4 19 L1 15 L8 15 L17 25Z" fill="#94b490" stroke="#2a5a30" stroke-width="1.1" stroke-linejoin="round"/><path d="M8.9 22.2 L4.0 17.9" stroke="#c4dcc0" stroke-width="1.6"/><path d="M3.5 19.4 l-1.1 -0.9" stroke="#f8fff4" stroke-width="1"/><path d="M17 26 L25 15 L31 12 L29 20 L20 28Z" fill="#94b490" stroke="#2a5a30" stroke-width="1.1" stroke-linejoin="round"/><path d="M22.4 21.4 L27.4 15.8" stroke="#c4dcc0" stroke-width="1.6"/><path d="M26.9 17.2 l0.9 -1.1" stroke="#f8fff4" stroke-width="1"/><path d="M15 30 L5 27 L1 25 L7 22 L17 26Z" fill="#94b490" stroke="#2a5a30" stroke-width="1.1" stroke-linejoin="round"/><path d="M9.6 26.9 L4.2 25.8" stroke="#c4dcc0" stroke-width="1.6"/><path d="M3.8 27.2 l-1.1 -0.2" stroke="#f8fff4" stroke-width="1"/><path d="M16 26 L27 23 L31 26 L26 30 L15 30Z" fill="#94b490" stroke="#2a5a30" stroke-width="1.1" stroke-linejoin="round"/><path d="M20.5 27.2 L26.6 26.5" stroke="#c4dcc0" stroke-width="1.6"/><path d="M26.1 28.0 l1.2 -0.1" stroke="#f8fff4" stroke-width="1"/></g><g transform="translate(122,310)" shape-rendering="auto"><ellipse cx="20" cy="29" rx="10" ry="2.5" fill="#d8a060" opacity=".7"/><path d="M12 26 L6 10 L3 3 L10 7 L18 23Z" fill="#94b490" stroke="#2a5a30" stroke-width="1.1" stroke-linejoin="round"/><path d="M9.7 16.4 L5.5 8.4" stroke="#c4dcc0" stroke-width="1.6"/><path d="M5.0 9.9 l-0.9 -1.6" stroke="#f8fff4" stroke-width="1"/><path d="M15 25 L22 8 L28 3 L27 11 L20 26Z" fill="#94b490" stroke="#2a5a30" stroke-width="1.1" stroke-linejoin="round"/><path d="M20.6 17.1 L24.9 8.6" stroke="#c4dcc0" stroke-width="1.6"/><path d="M24.4 10.1 l0.8 -1.7" stroke="#f8fff4" stroke-width="1"/><path d="M12 27 L11 8 L15 1 L20 7 L20 27Z" fill="#94b490" stroke="#2a5a30" stroke-width="1.1" stroke-linejoin="round"/><path d="M14.8 17.2 L14.8 7.5" stroke="#c4dcc0" stroke-width="1.6"/><path d="M14.2 9.0 l-0.1 -1.9" stroke="#f8fff4" stroke-width="1"/><path d="M13 28 L4 19 L1 15 L8 15 L17 25Z" fill="#94b490" stroke="#2a5a30" stroke-width="1.1" stroke-linejoin="round"/><path d="M8.9 22.2 L4.0 17.9" stroke="#c4dcc0" stroke-width="1.6"/><path d="M3.5 19.4 l-1.1 -0.9" stroke="#f8fff4" stroke-width="1"/><path d="M17 26 L25 15 L31 12 L29 20 L20 28Z" fill="#94b490" stroke="#2a5a30" stroke-width="1.1" stroke-linejoin="round"/><path d="M22.4 21.4 L27.4 15.8" stroke="#c4dcc0" stroke-width="1.6"/><path d="M26.9 17.2 l0.9 -1.1" stroke="#f8fff4" stroke-width="1"/><path d="M15 30 L5 27 L1 25 L7 22 L17 26Z" fill="#94b490" stroke="#2a5a30" stroke-width="1.1" stroke-linejoin="round"/><path d="M9.6 26.9 L4.2 25.8" stroke="#c4dcc0" stroke-width="1.6"/><path d="M3.8 27.2 l-1.1 -0.2" stroke="#f8fff4" stroke-width="1"/><path d="M16 26 L27 23 L31 26 L26 30 L15 30Z" fill="#94b490" stroke="#2a5a30" stroke-width="1.1" stroke-linejoin="round"/><path d="M20.5 27.2 L26.6 26.5" stroke="#c4dcc0" stroke-width="1.6"/><path d="M26.1 28.0 l1.2 -0.1" stroke="#f8fff4" stroke-width="1"/></g><g transform="translate(-6,342)" shape-rendering="auto"><ellipse cx="20" cy="29" rx="10" ry="2.5" fill="#d8a060" opacity=".7"/><path d="M12 26 L6 10 L3 3 L10 7 L18 23Z" fill="#94b490" stroke="#2a5a30" stroke-width="1.1" stroke-linejoin="round"/><path d="M9.7 16.4 L5.5 8.4" stroke="#c4dcc0" stroke-width="1.6"/><path d="M5.0 9.9 l-0.9 -1.6" stroke="#f8fff4" stroke-width="1"/><path d="M15 25 L22 8 L28 3 L27 11 L20 26Z" fill="#94b490" stroke="#2a5a30" stroke-width="1.1" stroke-linejoin="round"/><path d="M20.6 17.1 L24.9 8.6" stroke="#c4dcc0" stroke-width="1.6"/><path d="M24.4 10.1 l0.8 -1.7" stroke="#f8fff4" stroke-width="1"/><path d="M12 27 L11 8 L15 1 L20 7 L20 27Z" fill="#94b490" stroke="#2a5a30" stroke-width="1.1" stroke-linejoin="round"/><path d="M14.8 17.2 L14.8 7.5" stroke="#c4dcc0" stroke-width="1.6"/><path d="M14.2 9.0 l-0.1 -1.9" stroke="#f8fff4" stroke-width="1"/><path d="M13 28 L4 19 L1 15 L8 15 L17 25Z" fill="#94b490" stroke="#2a5a30" stroke-width="1.1" stroke-linejoin="round"/><path d="M8.9 22.2 L4.0 17.9" stroke="#c4dcc0" stroke-width="1.6"/><path d="M3.5 19.4 l-1.1 -0.9" stroke="#f8fff4" stroke-width="1"/><path d="M17 26 L25 15 L31 12 L29 20 L20 28Z" fill="#94b490" stroke="#2a5a30" stroke-width="1.1" stroke-linejoin="round"/><path d="M22.4 21.4 L27.4 15.8" stroke="#c4dcc0" stroke-width="1.6"/><path d="M26.9 17.2 l0.9 -1.1" stroke="#f8fff4" stroke-width="1"/><path d="M15 30 L5 27 L1 25 L7 22 L17 26Z" fill="#94b490" stroke="#2a5a30" stroke-width="1.1" stroke-linejoin="round"/><path d="M9.6 26.9 L4.2 25.8" stroke="#c4dcc0" stroke-width="1.6"/><path d="M3.8 27.2 l-1.1 -0.2" stroke="#f8fff4" stroke-width="1"/><path d="M16 26 L27 23 L31 26 L26 30 L15 30Z" fill="#94b490" stroke="#2a5a30" stroke-width="1.1" stroke-linejoin="round"/><path d="M20.5 27.2 L26.6 26.5" stroke="#c4dcc0" stroke-width="1.6"/><path d="M26.1 28.0 l1.2 -0.1" stroke="#f8fff4" stroke-width="1"/></g><g transform="translate(58,342)" shape-rendering="auto"><ellipse cx="20" cy="29" rx="10" ry="2.5" fill="#d8a060" opacity=".7"/><path d="M12 26 L6 10 L3 3 L10 7 L18 23Z" fill="#a4d054" stroke="#2c5a12" stroke-width="1.1" stroke-linejoin="round"/><path d="M9.7 16.4 L5.5 8.4" stroke="#d4ee8c" stroke-width="1.6"/><path d="M5.0 9.9 l-0.9 -1.6" stroke="#fbffd0" stroke-width="1"/><path d="M15 25 L22 8 L28 3 L27 11 L20 26Z" fill="#a4d054" stroke="#2c5a12" stroke-width="1.1" stroke-linejoin="round"/><path d="M20.6 17.1 L24.9 8.6" stroke="#d4ee8c" stroke-width="1.6"/><path d="M24.4 10.1 l0.8 -1.7" stroke="#fbffd0" stroke-width="1"/><path d="M12 27 L11 8 L15 1 L20 7 L20 27Z" fill="#a4d054" stroke="#2c5a12" stroke-width="1.1" stroke-linejoin="round"/><path d="M14.8 17.2 L14.8 7.5" stroke="#d4ee8c" stroke-width="1.6"/><path d="M14.2 9.0 l-0.1 -1.9" stroke="#fbffd0" stroke-width="1"/><path d="M13 28 L4 19 L1 15 L8 15 L17 25Z" fill="#a4d054" stroke="#2c5a12" stroke-width="1.1" stroke-linejoin="round"/><path d="M8.9 22.2 L4.0 17.9" stroke="#d4ee8c" stroke-width="1.6"/><path d="M3.5 19.4 l-1.1 -0.9" stroke="#fbffd0" stroke-width="1"/><path d="M17 26 L25 15 L31 12 L29 20 L20 28Z" fill="#a4d054" stroke="#2c5a12" stroke-width="1.1" stroke-linejoin="round"/><path d="M22.4 21.4 L27.4 15.8" stroke="#d4ee8c" stroke-width="1.6"/><path d="M26.9 17.2 l0.9 -1.1" stroke="#fbffd0" stroke-width="1"/><path d="M15 30 L5 27 L1 25 L7 22 L17 26Z" fill="#a4d054" stroke="#2c5a12" stroke-width="1.1" stroke-linejoin="round"/><path d="M9.6 26.9 L4.2 25.8" stroke="#d4ee8c" stroke-width="1.6"/><path d="M3.8 27.2 l-1.1 -0.2" stroke="#fbffd0" stroke-width="1"/><path d="M16 26 L27 23 L31 26 L26 30 L15 30Z" fill="#a4d054" stroke="#2c5a12" stroke-width="1.1" stroke-linejoin="round"/><path d="M20.5 27.2 L26.6 26.5" stroke="#d4ee8c" stroke-width="1.6"/><path d="M26.1 28.0 l1.2 -0.1" stroke="#fbffd0" stroke-width="1"/></g><path d="M26.5 90V558M58.5 90V558M90.5 90V558M122.5 90V558M154.5 90V558M186.5 90V558M218.5 90V558M250.5 90V558M282.5 90V558M314.5 90V558M346.5 90V558M378.5 90V558M410.5 90V558M442.5 90V558M474.5 90V558M506.5 90V558M0 118.5H510M0 150.5H510M0 182.5H510M0 214.5H510M0 246.5H510M0 278.5H510M0 310.5H510M0 342.5H510M0 374.5H510M0 406.5H510M0 438.5H510M0 470.5H510M0 502.5H510M0 534.5H510" stroke="#2a2620" stroke-opacity=".65" stroke-width="1" stroke-dasharray="2 2" fill="none"/><g shape-rendering="auto"><path d="M253 201 L443.5 240 L384.5 524 L194 484 Z" fill="none" stroke="#000" stroke-width="1" stroke-dasharray="4 2" shape-rendering="crispEdges"/><circle cx="257" cy="188" r="15.5" fill="none" stroke="#000" stroke-width="2.4"/><circle cx="256" cy="187" r="15.5" fill="#ff2000" fill-opacity=".22" stroke="#ff0000" stroke-width="2.6"/><path d="M271 205.5 L340.5 387 L260.5 369.5 L203.5 444.5 L303.5 445.5 L317 508 L412 376.5" fill="none" stroke="#000" stroke-width="2.6" stroke-linejoin="round" transform="translate(1 1)"/><path d="M271 205.5 L340.5 387 L260.5 369.5 L203.5 444.5 L303.5 445.5 L317 508 L412 376.5" fill="none" stroke="#0a0aee" stroke-width="2.6" stroke-linejoin="round"/><rect x="267.5" y="202.0" width="7" height="7" fill="#c4c4c4" stroke="#000" stroke-width="1.2"/><rect x="337.0" y="383.5" width="7" height="7" fill="#c4c4c4" stroke="#000" stroke-width="1.2"/><rect x="257.0" y="366.0" width="7" height="7" fill="#c4c4c4" stroke="#000" stroke-width="1.2"/><rect x="200.0" y="441.0" width="7" height="7" fill="#c4c4c4" stroke="#000" stroke-width="1.2"/><rect x="300.0" y="442.0" width="7" height="7" fill="#c4c4c4" stroke="#000" stroke-width="1.2"/><rect x="313.5" y="504.5" width="7" height="7" fill="#c4c4c4" stroke="#000" stroke-width="1.2"/><rect x="408" y="372.5" width="8" height="8" fill="#3a8ccc" stroke="#10243a" stroke-width="1.2"/></g></svg><div class="a" style="left:510px;top:91px;width:14px;height:467px;background:#e4e2df;border-left:1px solid #c6c3be"></div><div class="a" style="left:511px;top:91px;width:13px;height:13px;background:#f8f7f6;border-bottom:1px solid #c6c3be"></div><div class="a" style="left:511px;top:162px;width:13px;height:160px;background:#faf9f8;border-top:1px solid #c6c3be;border-bottom:1px solid #b5b2ad"></div><div class="a" style="left:511px;top:544px;width:13px;height:14px;background:#f8f7f6;border-top:1px solid #c6c3be"></div><div class="a" style="left:1px;top:558px;width:509px;height:14px;background:#e4e2df;border-top:1px solid #b9b6b1"></div><div class="a" style="left:1px;top:559px;width:14px;height:13px;background:#f8f7f6;border-right:1px solid #c6c3be"></div><div class="a" style="left:77px;top:559px;width:193px;height:13px;background:#faf9f8;border-left:1px solid #c6c3be;border-right:1px solid #b5b2ad"></div><div class="a" style="left:496px;top:559px;width:14px;height:13px;background:#f8f7f6;border-left:1px solid #c6c3be"></div><div class="a" style="left:510px;top:558px;width:14px;height:14px;background:#edeae6;border-left:1px solid #c6c3be;border-top:1px solid #c6c3be"></div><div class="a" style="left:536px;top:82px;width:260px;height:91px;background:#fff;border:1px solid #aeaba6"></div><div class="a" style="left:537px;top:83px;width:258px;height:17px;background:linear-gradient(#f8f7f6,#e9e7e4);border-bottom:1px solid #c6c3be"></div><div class="a" style="left:665px;top:84px;width:1px;height:15px;background:#c9c6c1;"></div><div class="a" style="left:537px;top:117px;width:258px;height:16px;background:#3388c8;"></div><div class="a" style="left:531px;top:210px;width:269px;height:1px;background:#bab7b2;"></div><div class="a" style="left:531px;top:210px;width:80px;height:21px;background:#dedbd7;border:1px solid #bab7b2;border-top:none;border-radius:0 0 3px 3px"></div><div class="a" style="left:610px;top:209px;width:72px;height:24px;background:#f7f6f4;border:1px solid #bab7b2;border-top:none;border-radius:0 0 3px 3px"></div><div class="a" style="left:681px;top:210px;width:64px;height:21px;background:#dedbd7;border:1px solid #bab7b2;border-top:none;border-radius:0 0 3px 3px"></div><div class="a" style="left:536px;top:289px;width:260px;height:1px;background:#c4c1bc;"></div><div class="a" style="left:536px;top:265px;width:118px;height:25px;background:linear-gradient(#f9f8f7,#efedea);border:1px solid #bab7b2;border-bottom:none;border-radius:3px 3px 0 0"></div><div class="a" style="left:536px;top:290px;width:260px;height:71px;background:#fff;border:1px solid #aeaba6"></div><svg class="a" style="left:537px;top:291px" width="243" height="56" viewBox="537 291 243 56" shape-rendering="crispEdges"><defs><pattern id="sand2" patternUnits="userSpaceOnUse" x="537" y="292" width="33" height="33"><rect width="32" height="32" fill="#fbd09a"/><path d="M28 29h6v1h-6zM12 11h7v1h-7zM30 11h3v1h-3zM28 19h4v1h-4zM5 2h7v1h-7zM25 28h7v1h-7zM10 0h7v1h-7zM4 3h3v1h-3zM12 15h7v1h-7zM1 29h5v1h-5zM28 12h7v1h-7zM14 18h6v1h-6zM0 5h6v1h-6zM17 26h7v1h-7z" fill="#fdd5a6"/><path d="M5 16h4v1h-4zM14 18h2v1h-2zM4 6h5v1h-5zM6 18h5v1h-5zM4 1h2v1h-2zM13 13h2v1h-2zM30 24h5v1h-5zM26 4h3v1h-3zM17 21h2v1h-2zM19 21h2v1h-2z" fill="#f7c58e"/><path d="M22 19h1v1h-1zM2 10h1v1h-1zM30 18h1v1h-1zM28 24h1v1h-1zM16 10h1v1h-1zM16 27h1v1h-1zM25 27h1v1h-1zM5 30h1v1h-1zM7 23h1v1h-1z" fill="#ffffff"/><path d="M9 19h1v1h-1zM17 4h1v1h-1zM29 4h1v1h-1zM27 29h1v1h-1zM22 1h1v1h-1zM18 6h1v1h-1zM4 17h1v1h-1zM11 1h1v1h-1zM14 6h1v1h-1zM3 24h1v1h-1zM20 21h1v1h-1zM13 21h1v1h-1zM21 21h1v1h-1z" fill="#bca080"/><path d="M26 9h1v1h-1zM12 27h1v1h-1zM19 18h1v1h-1zM3 30h1v1h-1zM29 12h1v1h-1zM25 6h1v1h-1zM10 11h1v1h-1zM1 8h1v1h-1zM4 4h1v1h-1zM9 0h1v1h-1zM12 17h1v1h-1zM6 10h1v1h-1z" fill="#f2ab5c"/></pattern><pattern id="brk2" patternUnits="userSpaceOnUse" x="553" y="314" width="32" height="16"><rect width="32" height="16" fill="#625636"/><path d="M-15 1h15v7h-15zM1 1h15v7h-15zM17 1h15v7h-15zM33 1h15v7h-15zM-7 9h15v7h-15zM9 9h15v7h-15zM25 9h15v7h-15zM41 9h15v7h-15z" fill="#9a9060"/><path d="M-15 1h14v1h-14zM-15 2h1v4h-1zM1 1h14v1h-14zM1 2h1v4h-1zM17 1h14v1h-14zM17 2h1v4h-1zM33 1h14v1h-14zM33 2h1v4h-1zM-7 9h14v1h-14zM-7 10h1v4h-1zM9 9h14v1h-14zM9 10h1v4h-1zM25 9h14v1h-14zM25 10h1v4h-1zM41 9h14v1h-14zM41 10h1v4h-1z" fill="#aaa070"/><path d="M-14 7h14v1h-14zM-1 2h1v5h-1zM2 7h14v1h-14zM15 2h1v5h-1zM18 7h14v1h-14zM31 2h1v5h-1zM34 7h14v1h-14zM47 2h1v5h-1zM-6 15h14v1h-14zM7 10h1v5h-1zM10 15h14v1h-14zM23 10h1v5h-1zM26 15h14v1h-14zM39 10h1v5h-1zM42 15h14v1h-14zM55 10h1v5h-1z" fill="#7e7448"/><path d="M-13 6h2v1h-2zM-9 6h1v1h-1zM3 6h2v1h-2zM7 6h1v1h-1zM19 6h2v1h-2zM23 6h1v1h-1zM35 6h2v1h-2zM39 6h1v1h-1zM-5 14h2v1h-2zM-1 14h1v1h-1zM11 14h2v1h-2zM15 14h1v1h-1zM27 14h2v1h-2zM31 14h1v1h-1zM43 14h2v1h-2zM47 14h1v1h-1z" fill="#cec6a4"/></pattern><pattern id="spk" patternUnits="userSpaceOnUse" x="0" y="0" width="32" height="32"><rect width="32" height="32" fill="#e8b888"/><path d="M15 8h1v1h-1zM23 30h1v1h-1zM4 0h1v1h-1zM30 16h1v1h-1zM14 12h1v1h-1zM30 30h1v1h-1zM25 9h1v1h-1zM14 9h1v1h-1zM24 0h1v1h-1zM4 10h1v1h-1zM2 19h1v1h-1zM1 17h1v1h-1zM30 24h1v1h-1zM27 25h1v1h-1zM28 8h1v1h-1zM23 6h1v1h-1zM2 8h1v1h-1zM31 13h1v1h-1zM16 27h1v1h-1zM19 26h1v1h-1zM24 22h1v1h-1zM26 14h1v1h-1zM21 1h1v1h-1zM17 10h1v1h-1zM20 6h1v1h-1zM13 17h1v1h-1zM18 7h1v1h-1zM4 30h1v1h-1zM30 5h1v1h-1zM22 4h1v1h-1zM26 9h1v1h-1zM1 18h1v1h-1zM27 26h1v1h-1zM7 2h1v1h-1zM2 24h1v1h-1zM21 17h1v1h-1zM15 2h1v1h-1zM19 0h1v1h-1zM4 6h1v1h-1zM2 12h1v1h-1zM26 18h1v1h-1zM16 9h1v1h-1zM2 21h1v1h-1zM20 23h1v1h-1zM8 24h1v1h-1zM24 29h1v1h-1zM24 6h1v1h-1zM17 27h1v1h-1zM15 19h1v1h-1zM27 16h1v1h-1zM19 21h1v1h-1zM0 26h1v1h-1zM20 1h1v1h-1zM24 8h1v1h-1zM3 21h1v1h-1zM29 22h1v1h-1zM22 17h1v1h-1zM31 1h1v1h-1zM3 1h1v1h-1zM23 16h1v1h-1zM29 19h1v1h-1zM20 11h1v1h-1zM23 11h1v1h-1zM20 23h1v1h-1zM16 19h1v1h-1zM24 6h1v1h-1zM1 8h1v1h-1zM19 14h1v1h-1zM17 15h1v1h-1zM20 11h1v1h-1zM27 6h1v1h-1zM6 20h1v1h-1zM21 14h1v1h-1zM28 10h1v1h-1zM5 21h1v1h-1zM13 28h1v1h-1zM17 14h1v1h-1zM7 2h1v1h-1zM12 20h1v1h-1zM11 17h1v1h-1zM21 5h1v1h-1zM22 8h1v1h-1zM26 18h1v1h-1zM17 29h1v1h-1zM22 26h1v1h-1zM18 26h1v1h-1zM26 2h1v1h-1zM26 9h1v1h-1zM12 0h1v1h-1zM30 27h1v1h-1zM14 2h1v1h-1zM29 18h1v1h-1zM21 14h1v1h-1zM4 18h1v1h-1zM7 15h1v1h-1zM2 2h1v1h-1zM12 27h1v1h-1zM3 0h1v1h-1zM30 7h1v1h-1zM10 19h1v1h-1zM15 1h1v1h-1zM26 3h1v1h-1zM7 21h1v1h-1zM8 16h1v1h-1zM30 3h1v1h-1zM22 14h1v1h-1zM12 7h1v1h-1zM7 10h1v1h-1zM15 17h1v1h-1zM8 0h1v1h-1zM31 25h1v1h-1zM3 17h1v1h-1zM15 17h1v1h-1zM27 3h1v1h-1zM30 20h1v1h-1zM0 3h1v1h-1zM8 2h1v1h-1zM7 3h1v1h-1zM4 30h1v1h-1zM2 5h1v1h-1zM31 20h1v1h-1zM10 20h1v1h-1zM4 22h1v1h-1zM24 24h1v1h-1zM19 23h1v1h-1zM16 12h1v1h-1zM21 27h1v1h-1zM7 8h1v1h-1zM0 24h1v1h-1zM5 11h1v1h-1zM2 23h1v1h-1zM29 24h1v1h-1zM2 27h1v1h-1zM3 23h1v1h-1zM31 20h1v1h-1zM26 26h1v1h-1zM29 1h1v1h-1zM15 13h1v1h-1zM17 4h1v1h-1zM27 14h1v1h-1zM27 8h1v1h-1zM1 20h1v1h-1zM23 16h1v1h-1zM7 29h1v1h-1zM7 24h1v1h-1zM6 20h1v1h-1zM6 0h1v1h-1zM30 9h1v1h-1zM15 24h1v1h-1zM2 5h1v1h-1zM6 24h1v1h-1zM11 1h1v1h-1zM21 7h1v1h-1zM1 7h1v1h-1zM30 18h1v1h-1zM19 5h1v1h-1zM2 15h1v1h-1zM6 6h1v1h-1zM3 20h1v1h-1zM11 4h1v1h-1zM15 11h1v1h-1zM15 29h1v1h-1zM25 16h1v1h-1zM23 25h1v1h-1zM22 26h1v1h-1zM5 24h1v1h-1zM15 26h1v1h-1zM10 26h1v1h-1zM30 9h1v1h-1zM25 9h1v1h-1zM10 6h1v1h-1zM31 30h1v1h-1zM28 11h1v1h-1zM8 17h1v1h-1zM12 9h1v1h-1zM20 14h1v1h-1zM18 26h1v1h-1zM17 13h1v1h-1zM19 1h1v1h-1zM17 30h1v1h-1zM24 12h1v1h-1zM11 23h1v1h-1zM15 20h1v1h-1zM30 9h1v1h-1zM26 30h1v1h-1zM13 29h1v1h-1zM1 30h1v1h-1zM4 25h1v1h-1zM2 29h1v1h-1zM14 15h1v1h-1zM4 13h1v1h-1zM16 15h1v1h-1zM12 16h1v1h-1zM8 11h1v1h-1zM2 16h1v1h-1zM10 2h1v1h-1zM20 11h1v1h-1zM27 5h1v1h-1zM5 7h1v1h-1zM5 16h1v1h-1zM18 2h1v1h-1zM22 28h1v1h-1zM21 0h1v1h-1zM1 21h1v1h-1zM21 27h1v1h-1zM24 31h1v1h-1zM4 13h1v1h-1zM31 25h1v1h-1zM8 20h1v1h-1zM7 17h1v1h-1zM4 27h1v1h-1zM7 28h1v1h-1zM16 6h1v1h-1zM23 23h1v1h-1zM28 18h1v1h-1zM16 6h1v1h-1zM21 7h1v1h-1zM31 22h1v1h-1zM3 18h1v1h-1zM11 9h1v1h-1zM11 23h1v1h-1zM29 7h1v1h-1zM6 9h1v1h-1zM21 26h1v1h-1zM19 11h1v1h-1zM29 30h1v1h-1zM19 11h1v1h-1zM4 6h1v1h-1zM11 25h1v1h-1zM22 6h1v1h-1zM17 17h1v1h-1zM24 3h1v1h-1zM8 2h1v1h-1zM30 17h1v1h-1zM15 22h1v1h-1zM21 25h1v1h-1zM28 4h1v1h-1zM22 31h1v1h-1zM7 9h1v1h-1zM17 6h1v1h-1zM7 7h1v1h-1zM11 12h1v1h-1zM26 25h1v1h-1zM8 9h1v1h-1zM25 12h1v1h-1zM10 11h1v1h-1zM12 16h1v1h-1zM23 18h1v1h-1zM1 28h1v1h-1zM26 24h1v1h-1zM20 19h1v1h-1zM31 19h1v1h-1zM30 1h1v1h-1zM12 0h1v1h-1zM6 14h1v1h-1zM31 11h1v1h-1zM29 12h1v1h-1zM12 13h1v1h-1zM2 28h1v1h-1zM7 18h1v1h-1zM9 8h1v1h-1zM29 5h1v1h-1zM3 1h1v1h-1zM23 14h1v1h-1zM4 31h1v1h-1zM1 21h1v1h-1zM20 21h1v1h-1zM22 8h1v1h-1zM5 2h1v1h-1zM5 21h1v1h-1z" fill="#7a5c44"/></pattern></defs><rect x="537" y="291" width="243" height="56" fill="url(#sand2)"/><rect x="553" y="308" width="67" height="40" fill="#5a5640"/><rect x="554" y="309" width="65" height="40" fill="#7b7862"/><rect x="559" y="314" width="55" height="40" fill="url(#brk2)"/><path d="M636 292 h66 v55 h-10 v-47 h-45 v47 h-11 z" fill="url(#spk)"/><path d="M724 314 h6 v-2 h50 v35 h-56 z" fill="url(#spk)"/><path d="M569 291h1v56h-1zM602 291h1v56h-1zM635 291h1v56h-1zM668 291h1v56h-1zM701 291h1v56h-1zM734 291h1v56h-1zM767 291h1v56h-1zM537 325h243v1h-243z" fill="#fff"/></svg><div class="a" style="left:780px;top:291px;width:15px;height:56px;background:#e4e2df;border-left:1px solid #c6c3be"></div><div class="a" style="left:781px;top:291px;width:14px;height:14px;background:#f8f7f6;border-bottom:1px solid #c6c3be"></div><div class="a" style="left:781px;top:305px;width:14px;height:28px;background:#faf9f8;border-bottom:1px solid #c6c3be"></div><div class="a" style="left:781px;top:333px;width:14px;height:14px;background:#f8f7f6;"></div><div class="a" style="left:537px;top:347px;width:243px;height:13px;background:#e4e2df;border-top:1px solid #c6c3be"></div><div class="a" style="left:537px;top:348px;width:14px;height:12px;background:#f8f7f6;border-right:1px solid #c6c3be"></div><div class="a" style="left:551px;top:348px;width:198px;height:12px;background:#faf9f8;border-right:1px solid #c6c3be"></div><div class="a" style="left:765px;top:348px;width:15px;height:12px;background:#f8f7f6;border-left:1px solid #c6c3be"></div><div class="a" style="left:780px;top:347px;width:15px;height:13px;background:#edeae6;border-left:1px solid #c6c3be;border-top:1px solid #c6c3be"></div><div class="a" style="left:712px;top:365px;width:83px;height:22px;background:#fff;border:1px solid #aeaba6;border-radius:3px"></div><div class="a" style="left:774px;top:366px;width:20px;height:20px;background:linear-gradient(#f6f5f3,#e6e4e1);border-left:1px solid #c6c3be;border-radius:0 2px 2px 0"></div><div class="a" style="left:531px;top:397px;width:269px;height:1px;background:#bab7b2;"></div><div class="a" style="left:531px;top:397px;width:73px;height:24px;background:#f7f6f4;border:1px solid #bab7b2;border-top:none;border-radius:0 0 3px 3px"></div><div class="a" style="left:603px;top:398px;width:75px;height:21px;background:#dedbd7;border:1px solid #bab7b2;border-top:none;border-radius:0 0 3px 3px"></div><div class="a" style="left:536px;top:453px;width:260px;height:84px;background:#fff;border:1px solid #aeaba6"></div><div class="a" style="left:537px;top:454px;width:243px;height:17px;background:linear-gradient(#f8f7f6,#e9e7e4);border-bottom:1px solid #c6c3be"></div><div class="a" style="left:632px;top:455px;width:1px;height:15px;background:#c9c6c1;"></div><div class="a" style="left:537px;top:471px;width:243px;height:18px;background:#a3a19d;"></div><div class="a" style="left:537px;top:489px;width:243px;height:18px;background:#f1efed;border-bottom:1px solid #d8d6d2"></div><div class="a" style="left:537px;top:507px;width:243px;height:18px;background:#fff;border-bottom:1px solid #d8d6d2"></div><div class="a" style="left:537px;top:525px;width:243px;height:11px;background:#f1efed;"></div><div class="a" style="left:632px;top:489px;width:1px;height:47px;background:#d8d6d2;"></div><div class="a" style="left:780px;top:454px;width:15px;height:82px;background:#e4e2df;border-left:1px solid #c6c3be"></div><div class="a" style="left:781px;top:454px;width:14px;height:16px;background:#f8f7f6;border-bottom:1px solid #c6c3be"></div><div class="a" style="left:781px;top:470px;width:14px;height:27px;background:#faf9f8;border-bottom:1px solid #c6c3be"></div><div class="a" style="left:781px;top:521px;width:14px;height:15px;background:#f8f7f6;border-top:1px solid #c6c3be"></div><div class="a" style="left:693px;top:576px;width:83px;height:22px;background:#fff;border:1px solid #aeaba6;border-radius:3px"></div><div class="a" style="left:755px;top:577px;width:20px;height:20px;background:linear-gradient(#f6f5f3,#e6e4e1);border-left:1px solid #c6c3be;border-radius:0 2px 2px 0"></div><svg class="a" style="left:0;top:0" width="800" height="600" viewBox="0 0 800 600">
<defs>
<linearGradient id="gpage" x1="0" y1="0" x2="1" y2="1"><stop offset="0" stop-color="#fbfbfa"/><stop offset="1" stop-color="#d9d9d5"/></linearGradient>
<linearGradient id="gfold" x1="0" y1="0" x2="0" y2="1"><stop offset="0" stop-color="#a4a490"/><stop offset="1" stop-color="#6e6e5c"/></linearGradient>
<linearGradient id="gdrive" x1="0" y1="0" x2="0" y2="1"><stop offset="0" stop-color="#f0f0ee"/><stop offset="1" stop-color="#b8b8b4"/></linearGradient>
<linearGradient id="gbtn" x1="0" y1="0" x2="0" y2="1"><stop offset="0" stop-color="#d6d4d0"/><stop offset="1" stop-color="#dedcd8"/></linearGradient>
<linearGradient id="gsun" x1="0" y1="0" x2="0" y2="1"><stop offset="0" stop-color="#3a3020"/><stop offset=".55" stop-color="#9a6a20"/><stop offset="1" stop-color="#f8b030"/></linearGradient>
<radialGradient id="gglow"><stop offset="0" stop-color="#fff480"/><stop offset=".6" stop-color="#fff07a" stop-opacity=".8"/><stop offset="1" stop-color="#fff07a" stop-opacity="0"/></radialGradient>
<linearGradient id="gpurp" x1="0" y1="0" x2="0" y2="1"><stop offset="0" stop-color="#e4b0f4"/><stop offset="1" stop-color="#b070d8"/></linearGradient>
</defs>
<!-- new -->
<rect x="19.5" y="27.5" width="17" height="19.5" rx="1" fill="url(#gpage)" stroke="#9c9c98"/>
<rect x="20" y="46" width="17" height="1.5" fill="#c8c8c4" opacity=".6"/>
<circle cx="32" cy="34" r="7" fill="url(#gglow)"/>
<path d="M32 29.2 L33.4 32.3 L36.7 32.6 L34.2 34.8 L35 38.1 L32 36.4 L29 38.1 L29.8 34.8 L27.3 32.6 L30.6 32.3 Z" fill="#fff" stroke="#e8c800" stroke-width="1.1"/>
<!-- open -->
<path d="M52.5 29 h7.5 l2 2 h9 v14 h-18.5 z" fill="#7c7c6a" stroke="#50504a"/>
<rect x="57" y="32.5" width="12" height="9" fill="#fbfbf9" stroke="#7a7a72" stroke-width=".8"/>
<path d="M58.5 35.5h9M58.5 37.5h9" stroke="#a4a49c" stroke-width="1"/>
<path d="M51 40.5 h21 l-1 7 h-19 z" fill="url(#gfold)" stroke="#50504a"/>
<!-- save -->
<path d="M87.5 32.5 h16 l2 8 v3 h-20 v-3 z" fill="url(#gdrive)" stroke="#6a6a66"/>
<rect x="85.5" y="43" width="20.5" height="4.5" rx="1" fill="#2e2e2e"/>
<rect x="97" y="44.5" width="6" height="1.5" fill="#7a7a7a"/>
<path d="M92.8 28.2 h6.4 v6.3 h3.6 l-6.8 7.3 l-6.8 -7.3 h3.6 z" fill="#7cd040" stroke="#3a9a20" stroke-width="1.1"/>
<path d="M94.3 29.7 h3 v6.2 h2 l-3.3 3.6" fill="none" stroke="#c8f4a0" stroke-width="1"/>
<rect x="116" y="30" width="1" height="17" fill="#d3d0cb"/><rect x="117" y="30" width="1" height="17" fill="#fbfaf9"/>
<!-- undo -->
<ellipse cx="137" cy="47" rx="9" ry="1.6" fill="#000" opacity=".09"/>
<path d="M128 34 L135.5 27.5 L135.5 31 C141 31 144.5 34 144.5 39 C144.5 42.5 142 45 138.5 46.2 C140.5 44 141 42 140.5 40 C140 37.5 138 36.5 135.5 36.5 L135.5 40.5 Z" fill="#f2d02a" stroke="#c0a000" stroke-width="1"/>
<path d="M130.5 34 L134.5 30.5 L134.5 32.5 C139 32 142 34 142.5 37.5" fill="none" stroke="#fff8a0" stroke-width="1" opacity=".8"/>
<!-- redo grey -->
<ellipse cx="166" cy="47" rx="9" ry="1.6" fill="#000" opacity=".07"/>
<path d="M128 34 L135.5 27.5 L135.5 31 C141 31 144.5 34 144.5 39 C144.5 42.5 142 45 138.5 46.2 C140.5 44 141 42 140.5 40 C140 37.5 138 36.5 135.5 36.5 L135.5 40.5 Z" transform="translate(302 0) scale(-1 1)" fill="#dcdcda" stroke="#a6a6a4" stroke-width="1"/>
<rect x="189" y="30" width="1" height="17" fill="#d3d0cb"/><rect x="190" y="30" width="1" height="17" fill="#fbfaf9"/>
<!-- gears -->
<path d="M217.1 38.5 L218.9 38.6 L218.9 40.4 L217.1 40.5 L216.5 42.0 L217.9 43.3 L216.8 44.6 L215.3 43.5 L213.9 44.4 L214.0 46.2 L212.4 46.5 L211.9 44.7 L210.3 44.4 L209.3 45.9 L207.8 45.1 L208.6 43.4 L207.5 42.2 L205.8 42.7 L205.2 41.1 L206.9 40.3 L206.9 38.7 L205.2 37.9 L205.8 36.3 L207.5 36.8 L208.6 35.6 L207.8 33.9 L209.3 33.1 L210.3 34.6 L211.9 34.3 L212.4 32.5 L214.0 32.8 L213.9 34.6 L215.3 35.5 L216.8 34.4 L217.9 35.7 L216.5 37.0Z" fill="#b8b8b4" stroke="#55554f" stroke-width="1.1" stroke-linejoin="round"/><circle cx="212" cy="39.5" r="2.2" fill="#f0f0ee" stroke="#55554f" stroke-width="1"/><path d="M207.0 31.1 L208.4 31.2 L208.4 32.8 L207.0 32.9 L206.4 34.2 L207.2 35.4 L206.0 36.3 L205.0 35.3 L203.6 35.6 L203.2 37.0 L201.6 36.6 L201.9 35.2 L200.7 34.3 L199.4 34.8 L198.7 33.4 L200.0 32.7 L200.0 31.3 L198.7 30.6 L199.4 29.2 L200.7 29.7 L201.9 28.8 L201.6 27.4 L203.2 27.0 L203.6 28.4 L205.0 28.7 L206.0 27.7 L207.2 28.6 L206.4 29.8Z" fill="#d0d0cc" stroke="#55554f" stroke-width="1.1" stroke-linejoin="round"/><circle cx="203.5" cy="32" r="1.5" fill="#f0f0ee" stroke="#55554f" stroke-width="1"/><path d="M205.4 42.8 L206.6 42.8 L206.6 44.2 L205.4 44.2 L204.9 45.3 L205.6 46.3 L204.6 47.2 L203.7 46.2 L202.6 46.5 L202.2 47.7 L200.9 47.4 L201.1 46.2 L200.2 45.4 L199.0 45.9 L198.5 44.7 L199.6 44.1 L199.6 42.9 L198.5 42.3 L199.0 41.1 L200.2 41.6 L201.1 40.8 L200.9 39.6 L202.2 39.3 L202.6 40.5 L203.7 40.8 L204.6 39.8 L205.6 40.7 L204.9 41.7Z" fill="#d0d0cc" stroke="#55554f" stroke-width="1.1" stroke-linejoin="round"/><circle cx="202.5" cy="43.5" r="1.3" fill="#f0f0ee" stroke="#55554f" stroke-width="1"/>
<path d="M224.5 36 h10 l-5 5.5 z" fill="#1a1a1a"/>
<!-- dice -->
<path d="M251 29 l8 -3 l6 5 v9 l-7 3 l-7 -5 z" fill="#f6f6f4" stroke="#1e1e1e" stroke-width="1.3"/>
<path d="M241 37 l9 -3 l7 5 v9 l-9 2 l-7 -5 z" fill="#fbfbfa" stroke="#1e1e1e" stroke-width="1.3"/>
<path d="M248 39.5 l9 -.5 M248 39.5 v10" stroke="#1e1e1e" stroke-width="1.2" fill="none"/>
<circle cx="249" cy="37" r="1.2" fill="#111"/><circle cx="244" cy="42" r="1" fill="#111"/><circle cx="246" cy="46" r="1" fill="#111"/><circle cx="253" cy="43" r="1" fill="#111"/>
<circle cx="255" cy="30" r="1" fill="#111"/><circle cx="259" cy="33" r="1" fill="#111"/><circle cx="262" cy="38" r="1" fill="#111"/>
<path d="M278 30h1v1h-1zM281 30h1v1h-1zM278 33h1v1h-1zM281 33h1v1h-1zM278 36h1v1h-1zM281 36h1v1h-1zM278 39h1v1h-1zM281 39h1v1h-1zM278 42h1v1h-1zM281 42h1v1h-1zM278 45h1v1h-1zM281 45h1v1h-1z" fill="#b8b5b0"/><path d="" />
<!-- stamp -->
<circle cx="301.5" cy="32" r="3" fill="#e4e4e0" stroke="#8a8a86"/>
<rect x="300" y="34.5" width="3" height="4" fill="#c8c8c4" stroke="#8a8a86" stroke-width=".8"/>
<path d="M294.5 39 h14 v6 h-14 z" fill="#dcdcd8" stroke="#8a8a86"/>
<path d="M299 41.5 h5 l-2.5 2 z" fill="#6a6a66"/>
<!-- terrain -->
<rect x="323.5" y="26.5" width="20" height="21" fill="#e4e4e0" stroke="#6a6a66"/>
<path d="M325 28 l6 8 l-4 6 l8 4 M333 28 l-4 9 l9 2 M340 28 v17" stroke="#b8b8b4" stroke-width="1" fill="none"/>
<path d="M326 49 l2 -6 l14 -14 l4 4 l-14 14 z" fill="#f0f0ee" stroke="#5a5a56" stroke-width="1.1"/>
<path d="M326 49 l2 -6 l4 4 z" fill="#6a6a66"/>
<!-- bucket -->
<ellipse cx="369" cy="47.5" rx="8" ry="1.3" fill="#000" opacity=".08"/>
<path d="M357.5 44 v-6.5 q0 -2 2 -2 h4" fill="none" stroke="#8a8a86" stroke-width="1.6"/>
<rect x="362.5" y="32.5" width="11.5" height="11.5" rx="1" transform="rotate(-28 368 38)" fill="#f2f2f0" stroke="#7a7a76" stroke-width="1.1"/>
<circle cx="368.5" cy="37.5" r="1.8" fill="none" stroke="#7a7a76" stroke-width="1.1"/>
<path d="M368.5 35.5 v-5 a3 3 0 0 1 6 0 v3" fill="none" stroke="#7a7a76" stroke-width="1.1"/>
<!-- eraser -->
<path d="M391.5 43.5 v-5 l4.5 -7 q.8 -1 2 -1 h11 q1.5 0 1 1.5 l-4 6.5 v5 q0 1.5 -1.5 1.5 h-11.5 q-1.5 0 -1.5 -1.5z" fill="#d8d8d4" stroke="#8c8c88"/>
<path d="M391.5 38.5 h13.5 l4.8 -7.5" fill="none" stroke="#8c8c88"/>
<path d="M392 39 h13 v5.5 h-13z" fill="#c4c4c0"/>
<!-- rect select -->
<rect x="426.5" y="31.5" width="16" height="12" fill="#dcdcd8" stroke="#222" stroke-dasharray="1.5 1.5"/>
<rect x="455" y="30" width="1" height="17" fill="#d3d0cb"/><rect x="456" y="30" width="1" height="17" fill="#fbfaf9"/>
<!-- select objects -->
<rect x="467" y="32" width="15.5" height="11.5" fill="#fff"/>
<rect x="470" y="33.5" width="11" height="9" fill="#cfd0cc"/>
<rect x="466.5" y="31.5" width="16" height="12" fill="none" stroke="#111" stroke-width="1.2" stroke-dasharray="1.2 1.2"/>
<rect x="468.3" y="33.6" width="10.5" height="7" rx="2.2" fill="#e8a0f4" stroke="#7a1a90" stroke-width="1.1"/>
<rect x="465.8" y="30.7" width="6.8" height="5.8" rx="2" fill="#e8a0f4" stroke="#7a1a90" stroke-width="1.1"/>
<!-- active button -->
<rect x="491.5" y="23.5" width="31" height="30" rx="3" fill="url(#gbtn)" stroke="#b2b0ac"/>
<path d="M497.5 43.5 L502.5 32 L514.5 29" fill="none" stroke="#0a8ae8" stroke-width="1.6"/>
<rect x="495.5" y="41.5" width="4" height="4" fill="#fff" stroke="#111"/>
<rect x="500.5" y="30" width="4" height="4" fill="#fff" stroke="#111"/>
<rect x="512.5" y="27" width="4" height="4" fill="#fff" stroke="#111"/>
<path d="M508.5 36 L508.5 46.5 L510.8 44.3 L513 48.5 L514.6 47.7 L512.5 43.5 L515.5 43.3 Z" fill="#111"/>
<!-- rect -->
<rect x="531" y="28" width="17" height="12" rx="1.2" fill="#cce4f4" stroke="#1088e0" stroke-width="2"/>
<path d="M530 41.2 h19" stroke="#222" stroke-width=".8"/>
<path d="M533.5 43.5 h10 l-5 4 z" fill="#f8901a"/>
<path d="M535.5 44.2 h6 l-3 2.2 z" fill="#ffd8a0"/>
<!-- ellipse -->
<ellipse cx="572.5" cy="34" rx="8.5" ry="4.6" fill="#cce4f4" stroke="#1088e0" stroke-width="2"/>
<path d="M565 38.5 q7.5 2 15 0" fill="none" stroke="#222" stroke-width=".8"/>
<path d="M567.3 43.5 h10 l-5 4 z" fill="#f8901a"/>
<path d="M569.3 44.2 h6 l-3 2.2 z" fill="#ffd8a0"/>
<!-- polygon -->
<path d="M594.5 36 L608.5 28.5 L613.5 40 Z" fill="#cce4f4" stroke="#1088e0" stroke-width="2" stroke-linejoin="round"/>
<path d="M596 37.5 L613 41" stroke="#222" stroke-width=".8"/>
<path d="M600.3 43.5 h10 l-5 4 z" fill="#f8901a"/>
<path d="M602.3 44.2 h6 l-3 2.2 z" fill="#ffd8a0"/>
<!-- polyline -->
<path d="M629 34.5 L637 31 L637 37.5 L643 32.5 L648.5 40.5" fill="none" stroke="#111" stroke-width="2.2" stroke-linejoin="round"/><path d="M628.5 33.5 L636.5 30 L636.5 36.5 L642.5 31.5 L648 39.5" fill="none" stroke="#1090e8" stroke-width="2.4" stroke-linejoin="round"/>
<path d="M633 43.5 h10 l-5 4 z" fill="#f8901a"/>
<path d="M635 44.2 h6 l-3 2.2 z" fill="#ffd8a0"/>
<!-- image -->
<rect x="661.5" y="27.5" width="21" height="14" rx="1.5" fill="#f0f0ee" stroke="#7a7a76"/>
<rect x="663.5" y="29.5" width="17" height="10" fill="url(#gsun)"/>
<path d="M665 39.5 a5 3 0 0 1 10 0 z" fill="#ffd860"/>
<path d="M675 39.5 v-4 l-2 -3 M675 35.5 l2 -3" stroke="#201a10" stroke-width="1" fill="none"/>
<path d="M667 43.5 h10 l-5 4 z" fill="#f8901a"/>
<path d="M669 44.2 h6 l-3 2.2 z" fill="#ffd8a0"/>
<rect x="693" y="30" width="1" height="17" fill="#d3d0cb"/><rect x="694" y="30" width="1" height="17" fill="#fbfaf9"/>
<!-- grey tile -->
<rect x="704.5" y="31.5" width="15" height="14" fill="#d8d8d6" stroke="#a8a8a6"/>
<rect x="706" y="33" width="12" height="11" fill="#b8b8b6"/>
<path d="M712 44 v-5 l-2 -3 M712 39 l3 -3" stroke="#909090" stroke-width="1" fill="none"/>
<path d="M5 30h1v1h-1zM8 30h1v1h-1zM5 33h1v1h-1zM8 33h1v1h-1zM5 36h1v1h-1zM8 36h1v1h-1zM5 39h1v1h-1zM8 39h1v1h-1zM5 42h1v1h-1zM8 42h1v1h-1zM5 45h1v1h-1zM8 45h1v1h-1z" fill="#b8b5b0"/><path d="" /><path d="M94 68.2 L95.2 68.6 L100.5 74 Q104.3 76.8 103.4 78.6 Q101.8 79.8 98.6 77.2 L96.5 74.6 Z" fill="#111"/><path d="M102.4 68.4 Q103.6 70.6 100.6 73.6 Q97 77 92.2 79.6 L91.4 79.2 Q94.8 75.6 97.4 72 Q100.2 68.2 102.4 68.4 Z" fill="#111"/><path d="M513 99h9l-4.5 -5z" fill="#4a4a4a"/><path d="M513 549h9l-4.5 5z" fill="#4a4a4a"/><path d="M9 561v8l-4 -4.0z" fill="#4a4a4a"/><path d="M501 561v8l4 -4.0z" fill="#4a4a4a"/><path d="M527 309h1v1h-1zM527 312h1v1h-1zM527 315h1v1h-1zM527 318h1v1h-1zM527 321h1v1h-1zM527 324h1v1h-1z" fill="#a8a6a2"/><rect x="773.6" y="62.6" width="9.8" height="9.8" rx="2" fill="none" stroke="#5e5e5c" stroke-width="1.3"/><rect x="777" y="64.6" width="4.2" height="4.2" rx="1" fill="none" stroke="#5e5e5c" stroke-width="1.1"/><rect x="775.6" y="66.2" width="4.2" height="4.2" rx="1" fill="#f4f3f1" stroke="#5e5e5c" stroke-width="1.1"/><rect x="787.6" y="62.6" width="9.8" height="9.8" rx="2" fill="none" stroke="#5e5e5c" stroke-width="1.3"/><path d="M790 65l5 5M795 65l-5 5" stroke="#4a4a48" stroke-width="2"/><path d="M542 106h9l-4.5 5z" fill="#333"/><rect x="560.5" y="102.5" width="13" height="13" fill="#fff" stroke="#8a8884"/><path d="M563.5 109.5 l2.5 3.5 l4.5 -8" fill="none" stroke="#000" stroke-width="1.8"/><rect x="580.7" y="110.3" width="11.8" height="5.8" rx="2.2" fill="#e8a0f4" stroke="#7a1a90" stroke-width="1.1"/><rect x="585" y="104.8" width="10.5" height="6.3" rx="2.2" fill="#e8a0f4" stroke="#7a1a90" stroke-width="1.1"/><rect x="582.7" y="101.7" width="6.8" height="5.8" rx="2" fill="#e8a0f4" stroke="#7a1a90" stroke-width="1.1"/><rect x="580.5" y="118.5" width="13" height="13" fill="#fff" stroke="#8a8884"/><path d="M583.5 125.5 l2.5 3.5 l4.5 -8" fill="none" stroke="#000" stroke-width="1.8"/><rect x="580.5" y="134.5" width="13" height="13" fill="#fff" stroke="#8a8884"/><path d="M583.5 141.5 l2.5 3.5 l4.5 -8" fill="none" stroke="#000" stroke-width="1.8"/><rect x="545.5" y="180.5" width="12" height="15" fill="url(#gpage)" stroke="#9c9c98"/><circle cx="554" cy="183" r="4" fill="url(#gglow)"/><path d="M554 179.5l1 2.3 2.4.2-1.8 1.6.6 2.4-2.2-1.3-2.2 1.3.6-2.4-1.8-1.6 2.4-.2z" fill="#fff" stroke="#e0c000" stroke-width=".9"/><rect x="572.5" y="184.5" width="12" height="11" fill="#c8d0dc" stroke="#303848"/><rect x="568.5" y="180.5" width="12" height="11" fill="#5a7090" stroke="#202838"/><rect x="570" y="182" width="9" height="5" fill="#8aa0c0"/><path d="M595 182 h14 v3 h-14 z" fill="#6a6a66" stroke="#222" stroke-width="1"/><path d="M596 185 h12 l-1 11 h-10 z" fill="#c0c0bc" stroke="#222" stroke-width="1"/><path d="M599 186v9M602 186v9M605 186v9" stroke="#333" stroke-width="1"/><rect x="620.2" y="189.3" width="12" height="6" rx="2.4" fill="#dcdcd8" stroke="#a4a4a0" stroke-width="1.1"/><rect x="624" y="184.8" width="11" height="6.3" rx="2.4" fill="#dcdcd8" stroke="#a4a4a0" stroke-width="1.1"/><rect x="621.7" y="180.7" width="7.5" height="6" rx="2.2" fill="#dcdcd8" stroke="#a4a4a0" stroke-width="1.1"/><path d="M632 193h5l-2.5 2.5z" fill="#a4a4a0"/><rect x="645.5" y="180.5" width="11" height="15" fill="#f2f2f0" stroke="#a8a8a4"/><path d="M649 186 a3 3 0 1 1 3 3 l5 6" fill="none" stroke="#8a8a86" stroke-width="1.4"/><path d="M660 237h1v1h-1zM663 237h1v1h-1zM666 237h1v1h-1zM669 237h1v1h-1zM672 237h1v1h-1zM675 237h1v1h-1z" fill="#a8a6a2"/><path d="M660 425h1v1h-1zM663 425h1v1h-1zM666 425h1v1h-1zM669 425h1v1h-1zM672 425h1v1h-1zM675 425h1v1h-1z" fill="#a8a6a2"/><rect x="773.6" y="245.6" width="9.8" height="9.8" rx="2" fill="none" stroke="#5e5e5c" stroke-width="1.3"/><rect x="777" y="247.6" width="4.2" height="4.2" rx="1" fill="none" stroke="#5e5e5c" stroke-width="1.1"/><rect x="775.6" y="249.2" width="4.2" height="4.2" rx="1" fill="#f4f3f1" stroke="#5e5e5c" stroke-width="1.1"/><rect x="787.6" y="245.6" width="9.8" height="9.8" rx="2" fill="none" stroke="#5e5e5c" stroke-width="1.3"/><path d="M790 248l5 5M795 248l-5 5" stroke="#4a4a48" stroke-width="2"/><path d="M777 274h10l-5.0 5z" fill="#333"/><path d="M784 301h8l-4.0 -5z" fill="#4a4a4a"/><path d="M784 336h8l-4.0 5z" fill="#4a4a4a"/><path d="M545 350v8l-4 -4.0z" fill="#4a4a4a"/><path d="M770 350v8l4 -4.0z" fill="#4a4a4a"/><rect x="545.5" y="368.5" width="12" height="15" fill="url(#gpage)" stroke="#9c9c98"/><circle cx="554" cy="371" r="4" fill="url(#gglow)"/><path d="M554 367.5l1 2.3 2.4.2-1.8 1.6.6 2.4-2.2-1.3-2.2 1.3.6-2.4-1.8-1.6 2.4-.2z" fill="#fff" stroke="#e0c000" stroke-width=".9"/><rect x="571.5" y="368.5" width="11" height="15" fill="#f4f4f2" stroke="#6a8aa8"/><path d="M569 376 h6 M573 373.5 l2.5 2.5 -2.5 2.5" stroke="#3a6a9a" stroke-width="1.3" fill="none"/><rect x="596.5" y="368.5" width="11" height="15" fill="#f4f4f2" stroke="#b8b8b4"/><path d="M603 376 h6 M607 373.5 l2.5 2.5 -2.5 2.5" stroke="#b0b0ac" stroke-width="1.3" fill="none"/><rect x="621.5" y="368.5" width="11" height="15" fill="#f2f2f0" stroke="#b8b8b4"/><path d="M625 374 a3 3 0 1 1 3 3 l5 6" fill="none" stroke="#a8a8a4" stroke-width="1.4"/><path d="M645 370 h14 v3 h-14 z" fill="#6a6a66" stroke="#222" stroke-width="1"/><path d="M646 373 h12 l-1 11 h-10 z" fill="#c0c0bc" stroke="#222" stroke-width="1"/><path d="M649 374v9M652 374v9M655 374v9" stroke="#333" stroke-width="1"/><rect x="669.5" y="368.5" width="14" height="15" fill="#d4d4d2" stroke="#a8a8a6"/><rect x="671" y="370" width="11" height="12" fill="#b8b8b6"/><path d="M698 373 l3 3 -3 3 M702 373 l3 3 -3 3" fill="none" stroke="#111" stroke-width="1.6"/><path d="M780 374h9l-4.5 4.5z" fill="#333"/><rect x="773.6" y="433.6" width="9.8" height="9.8" rx="2" fill="none" stroke="#5e5e5c" stroke-width="1.3"/><rect x="777" y="435.6" width="4.2" height="4.2" rx="1" fill="none" stroke="#5e5e5c" stroke-width="1.1"/><rect x="775.6" y="437.2" width="4.2" height="4.2" rx="1" fill="#f4f3f1" stroke="#5e5e5c" stroke-width="1.1"/><rect x="787.6" y="433.6" width="9.8" height="9.8" rx="2" fill="none" stroke="#5e5e5c" stroke-width="1.3"/><path d="M790 436l5 5M795 436l-5 5" stroke="#4a4a48" stroke-width="2"/><path d="M542 477h10l-5.0 5z" fill="#222"/><path d="M784 464h8l-4.0 -5z" fill="#4a4a4a"/><path d="M784 527h8l-4.0 5z" fill="#4a4a4a"/><path d="M550 546.5 h4 v4 h4 v4 h-4 v4 h-4 v-4 h-4 v-4 h4 z" fill="#4a80c8" stroke="#1e4a8a" stroke-width="1"/><rect x="571.5" y="550.5" width="11" height="3" rx="1" fill="#b0b0ac" stroke="#9a9a96"/><path d="M761 584h9l-4.5 5z" fill="#333"/><path d="M796 596h1.5v1.5h-1.5zM796 593h1.5v1.5h-1.5zM796 590h1.5v1.5h-1.5zM796 587h1.5v1.5h-1.5zM796 584h1.5v1.5h-1.5zM793 596h1.5v1.5h-1.5zM793 593h1.5v1.5h-1.5zM793 590h1.5v1.5h-1.5zM793 587h1.5v1.5h-1.5zM790 596h1.5v1.5h-1.5zM790 593h1.5v1.5h-1.5zM790 590h1.5v1.5h-1.5zM787 596h1.5v1.5h-1.5zM787 593h1.5v1.5h-1.5zM784 596h1.5v1.5h-1.5z" fill="#b8b6b2"/></svg><div class="a" style="left:416px;top:394px;width:112px;height:20px;background:#ffffdc;border:1px solid #111"></div><span class="t" style="left:9.00px;top:2.00px;font-size:13px;letter-spacing:0.428px;color:#000;font-weight:normal;">File</span><span class="t" style="left:44.00px;top:2.00px;font-size:13px;letter-spacing:0.737px;color:#000;font-weight:normal;">Edit</span><span class="t" style="left:82.00px;top:2.00px;font-size:13px;letter-spacing:0.482px;color:#000;font-weight:normal;">View</span><span class="t" style="left:124.00px;top:2.00px;font-size:13px;letter-spacing:0.970px;color:#000;font-weight:normal;">Map</span><span class="t" style="left:164.00px;top:2.00px;font-size:13px;letter-spacing:0.203px;color:#000;font-weight:normal;">Layer</span><span class="t" style="left:211.00px;top:2.00px;font-size:13px;letter-spacing:0.831px;color:#000;font-weight:normal;">Help</span><span class="t" style="left:13.00px;top:67.00px;font-size:13px;letter-spacing:0.676px;color:#000;font-weight:normal;">*desert.tmx</span><span class="t" style="left:2.00px;top:581.00px;font-size:13px;letter-spacing:0.817px;color:#000;font-weight:normal;">18, 14</span><span class="t" style="left:48.00px;top:581.00px;font-size:13px;letter-spacing:0.369px;color:#000;font-weight:normal;">Current layer: Object Layer 1</span><span class="t" style="left:536.00px;top:61.00px;font-size:13px;letter-spacing:0.238px;color:#000;font-weight:normal;">Objects</span><span class="t" style="left:539.00px;top:85.00px;font-size:13px;letter-spacing:0.518px;color:#000;font-weight:normal;">Name</span><span class="t" style="left:668.00px;top:85.00px;font-size:13px;letter-spacing:0.349px;color:#000;font-weight:normal;">Type</span><span class="t" style="left:603.00px;top:102.00px;font-size:13px;letter-spacing:0.288px;color:#000;font-weight:normal;">Object ...</span><span class="t" style="left:600.00px;top:118.00px;font-size:13px;letter-spacing:0.646px;color:#fff;font-weight:normal;">Walkpath</span><span class="t" style="left:669.00px;top:118.00px;font-size:13px;letter-spacing:-0.118px;color:#fff;font-weight:normal;">PATH</span><span class="t" style="left:599.00px;top:134.00px;font-size:13px;letter-spacing:0.728px;color:#000;font-weight:normal;">Monster</span><span class="t" style="left:669.00px;top:134.00px;font-size:13px;letter-spacing:-1.140px;color:#000;font-weight:normal;">ENEMY</span><span class="t" style="left:542.00px;top:214.00px;font-size:13px;letter-spacing:0.397px;color:#000;font-weight:normal;">Mini-map</span><span class="t" style="left:623.00px;top:215.00px;font-size:13px;letter-spacing:0.238px;color:#000;font-weight:normal;">Objects</span><span class="t" style="left:692.00px;top:214.00px;font-size:13px;letter-spacing:0.296px;color:#000;font-weight:normal;">Layers</span><span class="t" style="left:536.00px;top:244.00px;font-size:13px;letter-spacing:0.313px;color:#000;font-weight:normal;">Tilesets</span><span class="t" style="left:574.00px;top:271.00px;font-size:13px;letter-spacing:0.665px;color:#000;font-weight:normal;">Desert</span><span class="t" style="left:717.00px;top:370.00px;font-size:13px;letter-spacing:0.425px;color:#000;font-weight:normal;">100 %</span><span class="t" style="left:544.00px;top:403.00px;font-size:13px;letter-spacing:0.313px;color:#000;font-weight:normal;">Tilesets</span><span class="t" style="left:615.00px;top:402.00px;font-size:13px;letter-spacing:0.609px;color:#000;font-weight:normal;">Terrains</span><span class="t" style="left:534.00px;top:432.00px;font-size:13px;letter-spacing:0.695px;color:#000;font-weight:normal;">Properties</span><span class="t" style="left:539.00px;top:456.00px;font-size:13px;letter-spacing:0.624px;color:#000;font-weight:normal;">Property</span><span class="t" style="left:635.00px;top:456.00px;font-size:13px;letter-spacing:0.736px;color:#000;font-weight:normal;">Value</span><span class="t" style="left:560.00px;top:474.00px;font-size:13px;letter-spacing:0.408px;color:#f4f4f2;font-weight:normal;">Object</span><span class="t" style="left:559.00px;top:492.00px;font-size:13px;letter-spacing:0.851px;color:#000;font-weight:normal;">Name</span><span class="t" style="left:636.00px;top:492.00px;font-size:13px;letter-spacing:0.646px;color:#000;font-weight:normal;">Walkpath</span><span class="t" style="left:560.00px;top:510.00px;font-size:13px;letter-spacing:0.349px;color:#000;font-weight:normal;">Type</span><span class="t" style="left:635.00px;top:510.00px;font-size:13px;letter-spacing:0.216px;color:#000;font-weight:normal;">PATH</span><span class="t" style="left:698.00px;top:581.00px;font-size:13px;letter-spacing:0.425px;color:#000;font-weight:normal;">100 %</span><span class="t" style="left:421.00px;top:398.00px;font-size:13px;letter-spacing:0.258px;color:#000;font-weight:normal;">Walkpath (PATH)</span><span class="t" style="left:241.00px;top:155.84px;font-size:12px;letter-spacing:0.416px;color:#f00000;font-weight:normal;-webkit-text-stroke:.1px #f00000;text-shadow:1px 1px 0 #000">Mo...</span><div class="a" style="left:0;top:0;width:800px;height:536px;overflow:hidden"><span class="t" style="left:560.00px;top:528.00px;font-size:13px;letter-spacing:1.028px;color:#000;font-weight:normal;">Visible</span><svg class="a" style="left:0;top:0" width="800" height="600"><rect x="637.5" y="527.5" width="12" height="12" fill="#fff" stroke="#8a8884"/><path d="M640.5 534 l2.5 3.5 l4.5 -8" fill="none" stroke="#000" stroke-width="1.8"/></svg></div></body></html>
